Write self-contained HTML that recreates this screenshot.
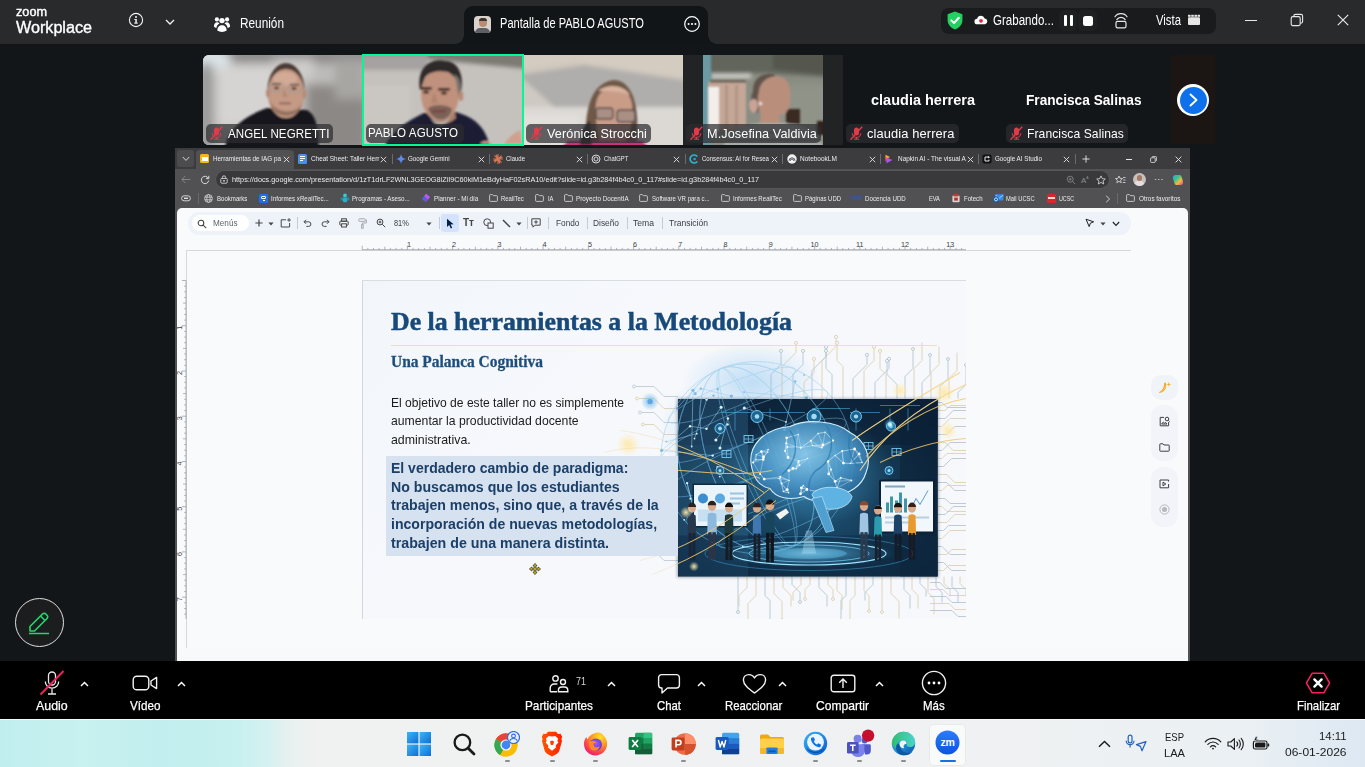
<!DOCTYPE html>
<html lang="es">
<head>
<meta charset="utf-8">
<title>Zoom Workplace</title>
<style>
*{box-sizing:border-box;margin:0;padding:0}
html,body{width:1365px;height:767px;overflow:hidden;background:#131619;font-family:"Liberation Sans",sans-serif;color:#fff}
.abs{position:absolute}
#root{position:relative;width:1365px;height:767px;overflow:hidden;background:#131619}
/* ---------- top bar ---------- */
#topbar{left:0;top:0;width:1365px;height:44px;background:#292a2c}
#sharetab{left:464px;top:6px;width:244px;height:38px;background:#121518;border-radius:9px 9px 0 0}
#sharetab:before,#sharetab:after{content:"";position:absolute;bottom:0;width:9px;height:9px}
#sharetab:before{left:-9px;background:radial-gradient(circle at 0 0,rgba(0,0,0,0) 8.5px,#121518 9px)}
#sharetab:after{right:-9px;background:radial-gradient(circle at 100% 0,rgba(0,0,0,0) 8.5px,#121518 9px)}
.t{position:absolute;white-space:nowrap;line-height:1;transform-origin:0 0}
#pill{left:941px;top:8px;width:275px;height:26px;background:#1a1b1d;border-radius:8px}
/* ---------- video strip ---------- */
.thumb{position:absolute;top:55px;height:90px;overflow:hidden}
.lbl{position:absolute;height:19px;background:rgba(44,45,48,.72);border-radius:5px;font-size:14px;line-height:19px;color:#fff;white-space:nowrap;padding-left:21px;letter-spacing:.1px}
.lbl svg{position:absolute;left:3px;top:2px}
.bigname{position:absolute;font-weight:bold;font-size:15.5px;white-space:nowrap;color:#fff;line-height:1}
/* ---------- shared screen ---------- */
#share{left:176px;top:150px;width:1013px;height:510px;background:#f9fafd;overflow:hidden}

/* share internals: coordinates are page-absolute (share is positioned at 0,0 overlay) */
#share{left:0;top:0;width:1365px;height:767px;background:none;overflow:visible;pointer-events:none}
.c{position:absolute}
.tt{position:absolute;white-space:nowrap;line-height:1;transform-origin:0 0;font-size:7.300px;color:#ececec;top:155.300px}
.bt{position:absolute;white-space:nowrap;line-height:1;transform-origin:0 0;font-size:7.200px;color:#ececec;top:194.600px}
.st{position:absolute;white-space:nowrap;line-height:1;transform-origin:0 0;font-size:8.600px;color:#3c4043;top:218.800px}
.tsep{position:absolute;top:153.500px;width:1px;height:10px;background:#6b6b6e}
.ssep{position:absolute;top:217px;width:1px;height:12px;background:#c7cad1}
.fold{position:absolute;top:194px;width:9px;height:8px}
/* ---------- zoom toolbar ---------- */
#ztool{left:0;top:660.700px;width:1365px;height:58.300px;background:#000}
.zl{position:absolute;top:698.800px;font-size:13px;color:#fff;white-space:nowrap;line-height:1;transform-origin:0 0;-webkit-text-stroke:.25px #fff}
/* ---------- taskbar ---------- */
#task{left:0;top:719px;width:1365px;height:48px;background:linear-gradient(90deg,#c0eeee 0,#c8f1f0 85px,#c1eeee 160px,#c7f0f0 235px,#d4f1f0 268px,#e9f1f0 292px,#f0f1f1 318px,#eff1f2 1000px,#eaf0f3 1250px,#dde8f3 100%);border-top:1px solid #f6f7f7}
</style>
</head>
<body>
<div id="root">

<!-- TOPBAR -->
<div id="topbar" class="abs"></div>
<div class="t" style="left:16px;top:6px;font-size:12.5px;color:#fff;-webkit-text-stroke:.4px #fff;--w:31px;transform:scaleX(1.0138)">zoom</div>
<div class="t" style="left:15.5px;top:19.5px;font-size:16px;color:#fff;-webkit-text-stroke:.35px #fff;--w:76px;transform:scaleX(1.0093)">Workplace</div>
<svg class="abs" style="left:128px;top:12px" width="16" height="16" viewBox="0 0 16 16"><circle cx="8" cy="8" r="6.6" fill="none" stroke="#f2f2f2" stroke-width="1.1"/><rect x="7.3" y="7" width="1.5" height="4.3" fill="#f2f2f2"/><rect x="6.4" y="7" width="2" height="1" fill="#f2f2f2"/><rect x="6.2" y="10.6" width="3.6" height="1" fill="#f2f2f2"/><circle cx="8" cy="4.9" r="1" fill="#f2f2f2"/></svg>
<svg class="abs" style="left:164px;top:17px" width="12" height="10" viewBox="0 0 12 10"><path d="M2 3 L6 7 L10 3" fill="none" stroke="#f2f2f2" stroke-width="1.3"/></svg>
<svg class="abs" style="left:213px;top:15px" width="18" height="18" viewBox="0 0 18 18" fill="#fff"><circle cx="9" cy="5.6" r="2.7"/><circle cx="3.9" cy="4.4" r="2.1"/><circle cx="14.1" cy="4.4" r="2.1"/><path d="M4.3 15.6c0-3.4 2-5.4 4.7-5.4s4.700 2 4.700 5.400c-1.300.9-3 1.300-4.700 1.300s-3.400-.4-4.700-1.300z"/><path d="M.9 11.500c0-2.600 1.400-4.200 3.200-4.200 1 0 1.800.4 2.400 1.100-1.700.9-2.800 2.500-3.100 4.600-1-.3-1.800-.8-2.500-1.500z"/><path d="M17.100 11.500c0-2.600-1.400-4.200-3.200-4.200-1 0-1.800.4-2.400 1.100 1.700.9 2.800 2.500 3.100 4.600 1-.3 1.800-.8 2.500-1.500z"/></svg>
<div class="t" style="left:240px;top:16px;font-size:14px;color:#fff;--w:44px;transform:scaleX(0.8436)">Reunión</div>

<div id="sharetab" class="abs"></div>
<div class="abs" style="left:474px;top:16px;width:17px;height:17px;border-radius:4px;overflow:hidden;background:#d9d3cc">
  <div class="abs" style="left:4.500px;top:2px;width:8px;height:9px;border-radius:4px;background:#b88d74"></div>
  <div class="abs" style="left:4.500px;top:1.500px;width:8px;height:3.500px;border-radius:4px 4px 0 0;background:#3d332e"></div>
  <div class="abs" style="left:1px;top:11.500px;width:15px;height:8px;border-radius:5px 5px 0 0;background:#5d5f66"></div>
</div>
<div class="t" style="left:500px;top:16px;font-size:14px;color:#fff;--w:144px;transform:scaleX(0.7930)">Pantalla de PABLO AGUSTO</div>
<svg class="abs" style="left:683px;top:15px" width="18" height="18" viewBox="0 0 18 18"><circle cx="9" cy="9" r="7.300" fill="none" stroke="#fff" stroke-width="1.200"/><circle cx="5.600" cy="9" r="1.050" fill="#fff"/><circle cx="9" cy="9" r="1.050" fill="#fff"/><circle cx="12.400" cy="9" r="1.050" fill="#fff"/></svg>

<div id="pill" class="abs"></div>
<svg class="abs" style="left:946px;top:11px" width="18" height="19" viewBox="0 0 18 19"><path d="M9 .6 L16.400 3.300 V9 c0 4.600-3.100 7.900-7.400 9.500 C4.700 16.900 1.600 13.600 1.600 9 V3.300 Z" fill="#23d160"/><path d="M5.300 9.400 L8 12 L12.800 6.800" fill="none" stroke="#fff" stroke-width="2" stroke-linecap="round" stroke-linejoin="round"/></svg>
<svg class="abs" style="left:974px;top:15px" width="14" height="10" viewBox="0 0 14 10"><path d="M3.400 9.300 a2.800 2.800 0 0 1 -.3 -5.600 a4 4 0 0 1 7.600 -.3 a3 3 0 0 1 .3 5.900 z" fill="#fff"/><circle cx="7" cy="5.800" r="1.900" fill="#e8273c"/></svg>
<div class="t" style="left:993px;top:13px;font-size:14px;color:#fff;--w:61px;transform:scaleX(0.8250)">Grabando...</div>
<div class="abs" style="left:1059px;top:10px;width:18px;height:21px;border-radius:5px;background:#1f2022"></div>
<div class="abs" style="left:1078px;top:10px;width:19px;height:21px;border-radius:5px;background:#1f2022"></div>
<div class="abs" style="left:1064px;top:15px;width:3px;height:11px;border-radius:1px;background:#fff"></div>
<div class="abs" style="left:1069.500px;top:15px;width:3px;height:11px;border-radius:1px;background:#fff"></div>
<div class="abs" style="left:1083px;top:15.500px;width:10px;height:10px;border-radius:2.500px;background:#fff"></div>
<svg class="abs" style="left:1112px;top:10px" width="18" height="20" viewBox="0 0 18 20" fill="none" stroke="#e8e8e8" stroke-width="1.200" stroke-linecap="round"><path d="M3 6.800 C5.500 2.600 12.500 2.600 15 6.800"/><path d="M4.800 9.600 C6.600 6.600 11.400 6.600 13.200 9.600"/><rect x="4" y="11.400" width="10" height="6.400" rx="1.600"/></svg>
<div class="t" style="left:1156px;top:13px;font-size:14px;color:#fff;--w:25px;transform:scaleX(0.8097)">Vista</div>
<svg class="abs" style="left:1187px;top:14px" width="14" height="12" viewBox="0 0 14 12" fill="#e6e6e6"><rect x="1" y="3.200" width="12" height="7.800" rx="1"/><rect x="1" y=".8" width="2.600" height="2" /><rect x="4.200" y=".8" width="2.600" height="2"/><rect x="7.400" y=".8" width="2.600" height="2"/><rect x="10.500" y=".8" width="2.500" height="2"/></svg>
<div class="abs" style="left:1245px;top:19.500px;width:12px;height:1.200px;background:#e8e8e8"></div>
<svg class="abs" style="left:1290px;top:13px" width="14" height="14" viewBox="0 0 14 14" fill="none" stroke="#e8e8e8" stroke-width="1.100"><rect x="1.200" y="3.600" width="9" height="9" rx="1.600"/><path d="M3.800 3.400 V3 a1.600 1.600 0 0 1 1.600 -1.600 H11 a1.600 1.600 0 0 1 1.600 1.600 V8.600 a1.600 1.600 0 0 1 -1.600 1.600 H10.400"/></svg>
<svg class="abs" style="left:1337px;top:14px" width="12" height="12" viewBox="0 0 12 12" fill="none" stroke="#e8e8e8" stroke-width="1.200"><path d="M.8 .8 L11.200 11.200 M11.200 .8 L.8 11.200"/></svg>

<!-- VIDEOSTRIP -->
<div id="strip">
<svg width="0" height="0" style="position:absolute"><defs>
<filter id="b1" x="-20%" y="-20%" width="140%" height="140%"><feGaussianBlur stdDeviation="1"/></filter>
<filter id="b2" x="-20%" y="-20%" width="140%" height="140%"><feGaussianBlur stdDeviation="2.200"/></filter>
<filter id="b4" x="-30%" y="-30%" width="160%" height="160%"><feGaussianBlur stdDeviation="5"/></filter>
</defs></svg>

<!-- 1 ANGEL -->
<div class="thumb" style="left:203px;width:159px;border-radius:6px 0 0 6px;background:#b9b7b5">
<svg class="abs" style="left:0;top:0" width="159" height="90" viewBox="0 0 159 90">
 <rect width="159" height="90" fill="#bdbbb9"/>
 <g filter="url(#b4)">
  <rect x="-5" y="-6" width="170" height="14" fill="#8a8a8a"/><ellipse cx="6" cy="6" rx="22" ry="12" fill="#dde6ea"/>
  <rect x="14" y="10" width="60" height="62" fill="#d6d4d2"/>
  <rect x="-4" y="8" width="14" height="90" fill="#9a9a9a"/>
  <rect x="104" y="30" width="60" height="66" fill="#8b8885"/>
  <rect x="132" y="4" width="30" height="40" fill="#a8a6a3"/>
  <rect x="70" y="4" width="40" height="20" fill="#cfcdcb"/>
 </g>
 <g filter="url(#b1)">
  <path d="M22 92 C26 72 44 60 64 53 L104 55 C116 62 114 78 116 92 Z" fill="#14161d"/>
  <ellipse cx="83" cy="35" rx="18.500" ry="27" fill="#4a3b34"/>
  <ellipse cx="83" cy="38.500" rx="18.200" ry="24.500" fill="#c59a85"/>
  <ellipse cx="82" cy="24" rx="12" ry="7" fill="#d2aa95"/>
  <path d="M66 44 C70 66 96 66 100 46 C96 60 72 60 66 44 Z" fill="#8a6756" opacity=".7"/>
  <rect x="68" y="28" width="13" height="9" rx="3" fill="none" stroke="#9d9a96" stroke-width="1"/>
  <rect x="85" y="29" width="13" height="9" rx="3" fill="none" stroke="#9d9a96" stroke-width="1"/>
  <rect x="76" y="47.500" width="12" height="1.800" rx=".9" fill="#8d5b52"/>
  <ellipse cx="73.500" cy="33" rx="2.600" ry="1.300" fill="#3a2a25"/><ellipse cx="91" cy="33.500" rx="2.600" ry="1.300" fill="#3a2a25"/>
  <rect x="69" y="28.500" width="9" height="1.500" fill="#5a4238"/><rect x="87" y="29" width="9" height="1.500" fill="#5a4238"/>
  <path d="M81 34 L79.500 42 H85 Z" fill="#a87d68" opacity=".6"/>
  <path d="M67 48 C70 62 96 62 99 48 C97 57 90 60 83 60 C76 60 69 57 67 48 Z" fill="#7d5e50" opacity=".55"/>
  <ellipse cx="65" cy="38" rx="2" ry="4.500" fill="#b58a76"/><ellipse cx="101.500" cy="39" rx="2" ry="4.500" fill="#b58a76"/>
 </g>
</svg>
<div class="lbl" style="left:3px;top:69px;width:127px"><svg width="15" height="15" viewBox="0 0 15 15"><rect x="5" y="1.500" width="5" height="8" rx="2.500" fill="#e23b49"/><path d="M3.300 7.200 a4.200 4.200 0 0 0 8.400 0" fill="none" stroke="#e23b49" stroke-width="1.100"/><rect x="7" y="11" width="1" height="2" fill="#e23b49"/><rect x="4.800" y="12.600" width="5.400" height="1.100" fill="#e23b49"/><path d="M1.500 13.800 L13.200 .8" stroke="#e23b49" stroke-width="1.300"/></svg><span class="t" style="left:21.500px;top:3.500px;font-size:12.700px;--w:101.500px;transform:scaleX(0.9093)">ANGEL NEGRETTI</span></div>
</div>

<!-- 2 PABLO -->
<div class="thumb" style="left:361.800px;top:53.900px;width:162.400px;height:92.300px;background:#c4c0bb;border:2.300px solid #05f896">
<svg class="abs" style="left:0;top:0" width="158" height="88" viewBox="0 0 158 88">
 <rect width="158" height="88" fill="#c5c1bc"/>
 <g filter="url(#b2)">
  <path d="M-6 -8 H166 V13 L60 3 L-6 1 Z" fill="#7d7973"/>
  <rect x="-4" y="30" width="50" height="64" fill="#cac7c3"/><rect x="-6" y="-2" width="70" height="16" fill="#a5a2a1"/>
 </g>
 <g filter="url(#b1)">
  <path d="M20 92 C26 76 42 66 60 57 L92 56 C112 62 122 72 126 92 Z" fill="#1a1f35"/>
  <path d="M66 60 L70 52 L90 52 L92 62 C84 70 72 70 66 60 Z" fill="#a97e6a"/>
  <ellipse cx="76" cy="38" rx="19" ry="27" fill="#c0917b"/>
  <path d="M56 34 C52 8 70 2 82 5 C96 6 100 22 97 36 C95 28 92 20 84 16 C74 14 62 16 60 24 C58 28 58 32 56 34 Z" fill="#2f2b2a"/>
  <path d="M90 18 C98 22 98 34 95 42 C93 34 93 26 90 18 Z" fill="#77736f"/>
  <path d="M64 53 C66 48 84 48 88 53 C86 66 70 68 64 53 Z" fill="#7a6259"/>
  <path d="M66 60 C70 68 82 68 86 60 C84 72 70 72 66 60 Z" fill="#b7b1ab"/>
  <rect x="56" y="31" width="12" height="2.400" rx="1" fill="#2b1f1c"/><rect x="74" y="32" width="12" height="2.400" rx="1" fill="#2b1f1c"/>
  <ellipse cx="62" cy="36" rx="3" ry="1.500" fill="#3b2a26"/><ellipse cx="80" cy="37" rx="3" ry="1.500" fill="#3b2a26"/>
  <path d="M70 36 L67 47 H74 Z" fill="#a77b66" opacity=".6"/>
  <ellipse cx="97" cy="40" rx="2.200" ry="5" fill="#b88a75"/>
  <rect x="68" y="54" width="14" height="2.600" rx="1" fill="#7b443f"/>
  <path d="M140 88 C144 82 150 77 156 74 L158 88 Z" fill="#cfa18c"/>
  <path d="M116 88 C118 84 124 84 128 88 Z" fill="#c99a85"/>
 </g>
</svg>
<div class="lbl" style="left:2px;top:68px;width:98px;padding-left:0"><span class="t" style="left:2px;top:3.500px;font-size:12.700px;--w:90px;transform:scaleX(0.9114)">PABLO AGUSTO</span></div>
</div>

<!-- 3 VERONICA -->
<div class="thumb" style="left:524px;width:159px;background:#c9c6c2">
<svg class="abs" style="left:0;top:0" width="159" height="90" viewBox="0 0 159 90">
 <rect width="159" height="90" fill="#b0aeac"/>
 <g filter="url(#b2)">
  <path d="M-5 -5 H165 V26 L60 10 L-5 20 Z" fill="#d0c8be"/>
  <path d="M-5 14 L50 6 L165 22 V-5 H-5 Z" fill="#d4ccc1"/>
  <path d="M-5 52 H165 V95 H-5 Z" fill="#dcd9d5"/>
  <path d="M-5 20 L30 52 H-5 Z" fill="#cfc9c3"/>
  <rect x="-5" y="60" width="60" height="36" fill="#e3dfdb"/>
 </g>
 <g filter="url(#b1)">
  <path d="M62 92 C60 56 66 28 90 25 C112 26 116 60 112 92 Z" fill="#6f5847"/>
  <path d="M72 60 C70 40 78 32 92 33 C106 34 110 46 108 64 C106 84 98 92 92 92 L78 92 C74 84 72 72 72 60 Z" fill="#c99c88"/>
  <path d="M74 36 C84 28 100 30 106 40 C96 36 84 36 74 36 Z" fill="#d9b39f"/>
  <rect x="72" y="53" width="17" height="11" rx="3" fill="#a98f84" stroke="#55494a" stroke-width="1.300"/>
  <rect x="93" y="55" width="18" height="12" rx="3" fill="#a98f84" stroke="#55494a" stroke-width="1.300"/>
  <path d="M38 92 L44 86 H118 L124 92 Z" fill="#c8307c"/>
  <path d="M56 90 C56 76 62 68 66 66 L68 90 Z" fill="#2d2a2b"/>
 </g>
</svg>
<div class="lbl" style="left:2px;top:69px;width:125px"><svg width="15" height="15" viewBox="0 0 15 15"><rect x="5" y="1.500" width="5" height="8" rx="2.500" fill="#e23b49"/><path d="M3.300 7.200 a4.200 4.200 0 0 0 8.400 0" fill="none" stroke="#e23b49" stroke-width="1.100"/><rect x="7" y="11" width="1" height="2" fill="#e23b49"/><rect x="4.800" y="12.600" width="5.400" height="1.100" fill="#e23b49"/><path d="M1.500 13.800 L13.200 .8" stroke="#e23b49" stroke-width="1.300"/></svg><span class="t" style="left:21px;top:3.500px;font-size:12.700px;--w:100px;transform:scaleX(0.9956)">Verónica Strocchi</span></div>
</div>

<!-- 4 JOSEFINA -->
<div class="thumb" style="left:683px;width:160px;background:#222324">
<svg class="abs" style="left:20px;top:0" width="120" height="90" viewBox="0 0 120 90">
 <rect width="120" height="90" fill="#8a8d82"/>
 <g filter="url(#b2)">
  <path d="M-4 -4 H124 V22 L60 18 L8 20 Z" fill="#62655b"/>
  <path d="M70 -4 H124 V20 L70 14 Z" fill="#54574d"/>
  <rect x="8" y="19" width="40" height="4" fill="#d8d8d2"/>
  <rect x="60" y="30" width="64" height="50" fill="#8f9388"/>
 </g>
 <rect x="-2" y="-2" width="10" height="94" fill="#6b9aa3" filter="url(#b1)"/>
 <g filter="url(#b1)">
  <rect x="5" y="27" width="38" height="48" fill="#c4a797"/>
  <rect x="5" y="32" width="11" height="44" fill="#f4eeea"/>
  <rect x="22" y="30" width="3" height="44" fill="#b39485"/><rect x="32" y="30" width="3" height="44" fill="#b39485"/>
  <rect x="7" y="25.500" width="36" height="2" fill="#5d5148"/>
  <rect x="83" y="54" width="14" height="15" fill="#3a2a23"/>
  <rect x="114" y="66" width="8" height="14" fill="#30221d"/>
  <path d="M50 36 C50 22 60 18 70 19 C74 19 70 26 64 30 C60 40 58 52 54 58 C48 56 46 46 50 36 Z" fill="#5f524b"/>
  <path d="M46 50 C46 44 52 42 54 46 C56 52 54 58 50 58 C48 56 46 54 46 50 Z" fill="#c9a396"/>
  <path d="M56 36 C58 22 74 18 82 24 C88 30 88 40 87 48 C86 56 82 60 76 60 L78 70 L56 72 L58 58 C54 52 54 44 56 36 Z" fill="#b98f7c"/>
  <circle cx="57.500" cy="48.500" r="1.500" fill="#f4f4f4"/>
  <path d="M20 92 C24 76 40 70 56 68 L82 68 C100 70 116 76 120 92 Z" fill="#a9ada8"/>
  <path d="M22 84 H118 V86.500 H22 Z M30 77 H112 V79 H30 Z" fill="#6f756f"/>
 </g>
</svg>
<div class="lbl" style="left:3px;top:69px;width:135px"><svg width="15" height="15" viewBox="0 0 15 15"><rect x="5" y="1.500" width="5" height="8" rx="2.500" fill="#e23b49"/><path d="M3.300 7.200 a4.200 4.200 0 0 0 8.400 0" fill="none" stroke="#e23b49" stroke-width="1.100"/><rect x="7" y="11" width="1" height="2" fill="#e23b49"/><rect x="4.800" y="12.600" width="5.400" height="1.100" fill="#e23b49"/><path d="M1.500 13.800 L13.200 .8" stroke="#e23b49" stroke-width="1.300"/></svg><span class="t" style="left:21px;top:3.500px;font-size:12.700px;--w:110px;transform:scaleX(0.9976)">M.Josefina Valdivia</span></div>
</div>

<!-- 5 CLAUDIA -->
<div class="t" style="left:871px;top:92px;font-size:15.500px;font-weight:bold;--w:104px;transform:scaleX(0.9356)">claudia herrera</div>
<div class="lbl" style="left:846px;top:124px;width:113px"><svg width="15" height="15" viewBox="0 0 15 15"><rect x="5" y="1.500" width="5" height="8" rx="2.500" fill="#e23b49"/><path d="M3.300 7.200 a4.200 4.200 0 0 0 8.400 0" fill="none" stroke="#e23b49" stroke-width="1.100"/><rect x="7" y="11" width="1" height="2" fill="#e23b49"/><rect x="4.800" y="12.600" width="5.400" height="1.100" fill="#e23b49"/><path d="M1.500 13.800 L13.200 .8" stroke="#e23b49" stroke-width="1.300"/></svg><span class="t" style="left:21px;top:3.500px;font-size:12.700px;--w:87.500px;transform:scaleX(1.0158)">claudia herrera</span></div>

<!-- 6 FRANCISCA -->
<div class="t" style="left:1025.500px;top:92px;font-size:15.500px;font-weight:bold;--w:115.500px;transform:scaleX(0.8819)">Francisca Salinas</div>
<div class="lbl" style="left:1006px;top:124px;width:122px"><svg width="15" height="15" viewBox="0 0 15 15"><rect x="5" y="1.500" width="5" height="8" rx="2.500" fill="#e23b49"/><path d="M3.300 7.200 a4.200 4.200 0 0 0 8.400 0" fill="none" stroke="#e23b49" stroke-width="1.100"/><rect x="7" y="11" width="1" height="2" fill="#e23b49"/><rect x="4.800" y="12.600" width="5.400" height="1.100" fill="#e23b49"/><path d="M1.500 13.800 L13.200 .8" stroke="#e23b49" stroke-width="1.300"/></svg><span class="t" style="left:21px;top:3.500px;font-size:12.700px;--w:97px;transform:scaleX(0.9524)">Francisca Salinas</span></div>

<!-- NEXT -->
<div class="abs" style="left:1171px;top:55px;width:44px;height:89px;background:#1b1513"></div>
<div class="abs" style="left:1177px;top:84px;width:32px;height:32px;border-radius:50%;background:#fff"></div>
<div class="abs" style="left:1179.500px;top:86.500px;width:27px;height:27px;border-radius:50%;background:#0e71eb"></div>
<svg class="abs" style="left:1186px;top:92px" width="14" height="16" viewBox="0 0 14 16"><path d="M4.500 2.500 L10.500 8 L4.500 13.500" fill="none" stroke="#fff" stroke-width="1.900" stroke-linecap="round" stroke-linejoin="round"/></svg>
</div>

<!-- SHARE -->
<div id="share" class="abs">
<div class="c" style="left:175px;top:148px;width:1015px;height:512.700px;background:#515154"></div>
<div class="c" style="left:175px;top:148px;width:1015px;height:21px;background:#3c3c3f"></div>
<div class="c" style="left:177px;top:150px;width:17px;height:17px;border-radius:3px;background:#4c4c4f"></div>
<svg class="c" style="left:181.500px;top:156px" width="8" height="6" viewBox="0 0 8 6"><path d="M.8 1 L4 4.400 L7.200 1" stroke="#e8e8e8" stroke-width=".9" fill="none"/></svg>
<div class="c" style="left:196.300px;top:150px;width:98px;height:19px;border-radius:4px 4px 0 0;background:#515154"></div>
<div class="c" style="left:200.3px;top:154px;width:9px;height:9px;border-radius:1.500px;background:#f5b912"><div class="c" style="left:1.500px;top:2.500px;width:6px;height:4px;background:#fff"></div></div>
<div class="tt" style="left:212.8px;--w:68.0px;transform:scaleX(0.8642)">Herramientas de IAG pa</div>
<svg class="c" style="left:282.8px;top:155.500px" width="7" height="7" viewBox="0 0 7 7"><path d="M.8 .8 L6.200 6.200 M6.200 .8 L.8 6.200" stroke="#e4e4e4" stroke-width=".9" fill="none"/></svg>
<div class="c" style="left:298.0px;top:154px;width:8.500px;height:9.500px;border-radius:1.500px;background:#4b8bf5"><div class="c" style="left:1.800px;top:2.400px;width:5px;height:1px;background:#fff"></div><div class="c" style="left:1.800px;top:4.300px;width:5px;height:1px;background:#fff"></div><div class="c" style="left:1.800px;top:6.200px;width:3.500px;height:1px;background:#fff"></div></div>
<div class="tt" style="left:310.6px;--w:68.4px;transform:scaleX(0.8752)">Cheat Sheet: Taller Herr</div>
<svg class="c" style="left:380.1px;top:155.500px" width="7" height="7" viewBox="0 0 7 7"><path d="M.8 .8 L6.200 6.200 M6.200 .8 L.8 6.200" stroke="#e4e4e4" stroke-width=".9" fill="none"/></svg>
<div class="tsep" style="left:391.5px"></div>
<svg class="c" style="left:395.7px;top:153.500px" width="10" height="10" viewBox="0 0 10 10"><defs><linearGradient id="gg" x1="0" y1="1" x2="1" y2="0"><stop offset="0" stop-color="#4f8df6"/><stop offset=".6" stop-color="#5b8bf0"/><stop offset="1" stop-color="#e8a33a"/></linearGradient></defs><path d="M5 0 C5.300 3 7 4.700 10 5 C7 5.300 5.300 7 5 10 C4.700 7 3 5.300 0 5 C3 4.700 4.700 3 5 0 Z" fill="url(#gg)"/></svg>
<div class="tt" style="left:408.4px;--w:41.6px;transform:scaleX(0.8547)">Google Gemini</div>
<svg class="c" style="left:478.0px;top:155.500px" width="7" height="7" viewBox="0 0 7 7"><path d="M.8 .8 L6.200 6.200 M6.200 .8 L.8 6.200" stroke="#e4e4e4" stroke-width=".9" fill="none"/></svg>
<div class="tsep" style="left:489.2px"></div>
<svg class="c" style="left:493.4px;top:153.500px" width="10" height="10" viewBox="0 0 10 10" stroke="#d97757" stroke-width="1.100" stroke-linecap="round"><path d="M5 .6 V9.400 M.6 5 H9.400 M1.800 1.800 L8.200 8.200 M8.200 1.800 L1.800 8.200 M3.200 .9 L6.800 9.100 M.9 6.800 L9.100 3.200"/></svg>
<div class="tt" style="left:506.0px;--w:19.0px;transform:scaleX(0.8216)">Claude</div>
<svg class="c" style="left:575.5px;top:155.500px" width="7" height="7" viewBox="0 0 7 7"><path d="M.8 .8 L6.200 6.200 M6.200 .8 L.8 6.200" stroke="#e4e4e4" stroke-width=".9" fill="none"/></svg>
<div class="tsep" style="left:586.9px"></div>
<svg class="c" style="left:591.1px;top:153.500px" width="10" height="10" viewBox="0 0 10 10" fill="none" stroke="#e6e6e6" stroke-width=".9"><circle cx="5" cy="5" r="4"/><path d="M5 2.800 L6.900 3.900 V6.100 L5 7.200 L3.100 6.100 V3.900 Z"/></svg>
<div class="tt" style="left:603.8px;--w:24.2px;transform:scaleX(0.7955)">ChatGPT</div>
<svg class="c" style="left:673.3px;top:155.500px" width="7" height="7" viewBox="0 0 7 7"><path d="M.8 .8 L6.200 6.200 M6.200 .8 L.8 6.200" stroke="#e4e4e4" stroke-width=".9" fill="none"/></svg>
<div class="tsep" style="left:684.6px"></div>
<svg class="c" style="left:688.8px;top:153.500px" width="10" height="10" viewBox="0 0 10 10" fill="none"><path d="M8.300 2.600 A4 4 0 1 0 8.300 7.400" stroke="#2bb5c8" stroke-width="1.700"/><circle cx="5.600" cy="5" r="1.300" fill="#2d9fe0"/></svg>
<div class="tt" style="left:702.0px;--w:67.0px;transform:scaleX(0.8300)">Consensus: AI for Resea</div>
<svg class="c" style="left:771.3px;top:155.500px" width="7" height="7" viewBox="0 0 7 7"><path d="M.8 .8 L6.200 6.200 M6.200 .8 L.8 6.200" stroke="#e4e4e4" stroke-width=".9" fill="none"/></svg>
<div class="tsep" style="left:782.3px"></div>
<svg class="c" style="left:786.5px;top:153.500px" width="10" height="10" viewBox="0 0 10 10"><circle cx="5" cy="5" r="4.700" fill="#f2f2f2"/><path d="M2 6.800 a3 3 0 0 1 6 0 M3.300 6.800 a1.700 1.700 0 0 1 3.400 0" fill="none" stroke="#333" stroke-width=".8"/></svg>
<div class="tt" style="left:799.6px;--w:36.9px;transform:scaleX(0.8918)">NotebookLM</div>
<svg class="c" style="left:869.1px;top:155.500px" width="7" height="7" viewBox="0 0 7 7"><path d="M.8 .8 L6.200 6.200 M6.200 .8 L.8 6.200" stroke="#e4e4e4" stroke-width=".9" fill="none"/></svg>
<div class="tsep" style="left:880.0px"></div>
<svg class="c" style="left:884.2px;top:153.500px" width="10" height="10" viewBox="0 0 10 10"><path d="M1.500 .8 L6 3 L1.500 5.200 Z" fill="#f7b32b"/><path d="M2.500 3.400 L8.500 6 L2.500 9.200 Z" fill="#a855f7"/><path d="M1.500 2.800 L5 5 L1.500 7.400 Z" fill="#ec4899"/></svg>
<div class="tt" style="left:897.5px;--w:67.9px;transform:scaleX(0.8779)">Napkin AI - The visual A</div>
<svg class="c" style="left:966.5px;top:155.500px" width="7" height="7" viewBox="0 0 7 7"><path d="M.8 .8 L6.200 6.200 M6.200 .8 L.8 6.200" stroke="#e4e4e4" stroke-width=".9" fill="none"/></svg>
<div class="tsep" style="left:977.7px"></div>
<svg class="c" style="left:981.9px;top:153.500px" width="10" height="10" viewBox="0 0 10 10"><rect x=".4" y=".4" width="9.200" height="9.200" rx="2" fill="#101114"/><path d="M6.800 3 H3 V7 H7 V5.600" fill="none" stroke="#fff" stroke-width=".9"/><path d="M6.800 1.600 L7.200 2.800 L8.400 3.200 L7.200 3.600 L6.800 4.800 L6.400 3.600 L5.200 3.200 L6.400 2.800 Z" fill="#fff"/></svg>
<div class="tt" style="left:995.0px;--w:47.0px;transform:scaleX(0.8580)">Google AI Studio</div>
<svg class="c" style="left:1063.3px;top:155.500px" width="7" height="7" viewBox="0 0 7 7"><path d="M.8 .8 L6.200 6.200 M6.200 .8 L.8 6.200" stroke="#e4e4e4" stroke-width=".9" fill="none"/></svg>
<div class="tsep" style="left:1075.4px"></div>
<svg class="c" style="left:1082px;top:155px" width="8" height="8" viewBox="0 0 8 8"><path d="M4 .4 V7.600 M.4 4 H7.600" stroke="#e8e8e8" stroke-width=".9"/></svg>
<div class="c" style="left:1126px;top:158.500px;width:6px;height:1px;background:#e8e8e8"></div>
<svg class="c" style="left:1150px;top:155.500px" width="7" height="7" viewBox="0 0 7 7" fill="none" stroke="#e8e8e8" stroke-width=".8"><rect x=".6" y="1.800" width="4.600" height="4.600" rx=".8"/><path d="M2 1.600 V1.200 a.6 .6 0 0 1 .6 -.6 H5.800 a.6 .6 0 0 1 .6 .6 V4.400 a.6 .6 0 0 1 -.6 .6 H5.400"/></svg>
<svg class="c" style="left:1174.500px;top:155.500px" width="7" height="7" viewBox="0 0 7 7"><path d="M.6 .6 L6.400 6.400 M6.400 .6 L.6 6.400" stroke="#e8e8e8" stroke-width=".9" fill="none"/></svg>
<svg class="c" style="left:181px;top:175px" width="10" height="9" viewBox="0 0 10 9"><path d="M9.400 4.500 H1 M4.400 .9 L.9 4.500 L4.400 8.100" stroke="#8b8b8e" stroke-width=".9" fill="none"/></svg>
<svg class="c" style="left:200px;top:174.500px" width="10" height="10" viewBox="0 0 10 10"><path d="M8.300 3.200 A3.700 3.700 0 1 0 8.700 5.600" stroke="#e6e6e6" stroke-width=".9" fill="none"/><path d="M8.800 .8 V3.600 H6" stroke="#e6e6e6" stroke-width=".9" fill="none"/></svg>
<div class="c" style="left:216px;top:171.300px;width:893px;height:16.700px;border-radius:8.400px;background:#39393c;box-shadow:0 0 0 .5px #5e5e61"></div>
<svg class="c" style="left:220px;top:175px" width="8" height="9" viewBox="0 0 8 9" fill="none" stroke="#e6e6e6" stroke-width=".8"><rect x=".8" y="3.400" width="6.400" height="4.800" rx="1"/><path d="M2.400 3.400 V2.400 a1.600 1.600 0 0 1 3.200 0 V3.400"/><circle cx="4" cy="5.800" r=".5" fill="#e6e6e6"/></svg>
<div class="t" style="left:231.800px;top:175.600px;font-size:7.800px;color:#ededed;--w:527px;transform:scaleX(0.9343)">https://docs.google.com/presentation/d/1zT1drLF2WNL3GEOG8iZiI9C60kiM1eBdyHaF02sRA10/edit?slide=id.g3b284f4b4c0_0_117#slide=id.g3b284f4b4c0_0_117</div>
<svg class="c" style="left:1066px;top:175px" width="10" height="10" viewBox="0 0 10 10" fill="none" stroke="#8e8e91" stroke-width=".8"><circle cx="4.200" cy="4.200" r="3"/><path d="M6.400 6.400 L9 9 M2.800 4.200 H5.600 M4.200 2.800 V5.600"/></svg>
<div class="t" style="left:1081px;top:175.500px;font-size:8px;color:#8e8e91">A<span style="font-size:5px;vertical-align:3px">ᴬ</span></div>
<svg class="c" style="left:1096px;top:174.500px" width="10" height="10" viewBox="0 0 10 10"><path d="M5 .9 L6.300 3.700 L9.300 4 L7 6 L7.700 9 L5 7.400 L2.300 9 L3 6 L.7 4 L3.700 3.700 Z" fill="none" stroke="#e0e0e0" stroke-width=".8"/></svg>
<svg class="c" style="left:1115px;top:174.500px" width="11" height="10" viewBox="0 0 11 10" fill="none" stroke="#e0e0e0" stroke-width=".8"><path d="M4 1 L5 3.300 L7.500 3.600 L5.600 5.200 L6.200 7.700 L4 6.400 L1.800 7.700 L2.400 5.200 L.5 3.600 L3 3.300 Z"/><path d="M8 2.500 H10.500 M8.300 5 H10.500 M7.800 7.500 H10.500"/></svg>
<div class="c" style="left:1132.800px;top:173px;width:13.400px;height:13.400px;border-radius:50%;background:#c8c2be;overflow:hidden"><div class="c" style="left:4.200px;top:2px;width:5px;height:6px;border-radius:3px;background:#a87a65"></div><div class="c" style="left:1.700px;top:8px;width:10px;height:7px;border-radius:4px 4px 0 0;background:#e6dfe0"></div></div>
<div class="t" style="left:1154px;top:174.500px;font-size:9px;color:#e6e6e6;letter-spacing:.3px">···</div>
<svg class="c" style="left:1172px;top:173.500px" width="12" height="12" viewBox="0 0 12 12"><defs><linearGradient id="cp" x1="0" y1="0" x2="1" y2="1"><stop offset="0" stop-color="#2aa6f0"/><stop offset=".35" stop-color="#36c48f"/><stop offset=".65" stop-color="#f6b73c"/><stop offset="1" stop-color="#e0459b"/></linearGradient></defs><path d="M3.500 1 H7.500 C9 1 9.400 2 9.800 3.400 L11 7.400 C11.400 9 10.600 11 8.500 11 H4.500 C3 11 2.600 10 2.200 8.600 L1 4.600 C.6 3 1.400 1 3.500 1 Z" fill="url(#cp)"/></svg>
<svg class="c" style="left:181px;top:194.500px" width="10" height="7" viewBox="0 0 10 7" fill="none" stroke="#e0e0e0" stroke-width=".9"><rect x=".6" y=".8" width="8.800" height="5" rx="2.500"/><rect x="3" y="2.600" width="4" height="1.400" fill="#e0e0e0" stroke="none"/></svg>
<div class="c" style="left:197.500px;top:192.500px;width:1px;height:11px;background:#69696c"></div>
<svg class="c" style="left:204px;top:193.500px" width="9" height="9" viewBox="0 0 9 9" fill="none" stroke="#e6e6e6" stroke-width=".7"><circle cx="4.500" cy="4.500" r="3.900"/><ellipse cx="4.500" cy="4.500" rx="1.700" ry="3.900"/><path d="M.8 3.200 H8.200 M.8 5.800 H8.200"/></svg>
<div class="bt" style="left:216.6px;--w:30.4px;transform:scaleX(0.8455)">Bookmarks</div>
<div class="bt" style="left:270.6px;--w:57.8px;transform:scaleX(0.8613)">Informes xRealiTec...</div>
<div class="bt" style="left:352.0px;--w:57.6px;transform:scaleX(0.8583)">Programas - Aseso...</div>
<div class="bt" style="left:433.7px;--w:44.3px;transform:scaleX(0.8732)">Planner - Mi día</div>
<div class="bt" style="left:501.0px;--w:22.8px;transform:scaleX(0.8272)">RealiTec</div>
<div class="bt" style="left:547.5px;--w:5.5px;transform:scaleX(0.8092)">IA</div>
<div class="bt" style="left:576.0px;--w:52.6px;transform:scaleX(0.8776)">Proyecto DocentIA</div>
<div class="bt" style="left:651.5px;--w:57.5px;transform:scaleX(0.8417)">Software VR para c...</div>
<div class="bt" style="left:733.0px;--w:48.7px;transform:scaleX(0.8465)">Informes RealiTec</div>
<div class="bt" style="left:805.0px;--w:36.0px;transform:scaleX(0.8267)">Páginas UDD</div>
<div class="bt" style="left:864.8px;--w:40.8px;transform:scaleX(0.8581)">Docencia UDD</div>
<div class="bt" style="left:928.5px;--w:10.9px;transform:scaleX(0.7865)">EVA</div>
<div class="bt" style="left:963.5px;--w:18.5px;transform:scaleX(0.8415)">Fotech</div>
<div class="bt" style="left:1006.0px;--w:28.6px;transform:scaleX(0.8046)">Mail UCSC</div>
<div class="bt" style="left:1058.6px;--w:15.2px;transform:scaleX(0.7460)">UCSC</div>
<div class="bt" style="left:1138.6px;--w:41.4px;transform:scaleX(0.8859)">Otros favoritos</div>
<svg class="fold" style="left:488.5px" viewBox="0 0 9 8"><path d="M.6 1.400 a.8 .8 0 0 1 .8 -.8 H3.400 L4.400 1.700 H7.600 a.8 .8 0 0 1 .8 .8 V6.600 a.8 .8 0 0 1 -.8 .8 H1.400 a.8 .8 0 0 1 -.8 -.8 Z" fill="none" stroke="#e0e0e0" stroke-width=".8"/></svg>
<svg class="fold" style="left:534.5px" viewBox="0 0 9 8"><path d="M.6 1.400 a.8 .8 0 0 1 .8 -.8 H3.400 L4.400 1.700 H7.600 a.8 .8 0 0 1 .8 .8 V6.600 a.8 .8 0 0 1 -.8 .8 H1.400 a.8 .8 0 0 1 -.8 -.8 Z" fill="none" stroke="#e0e0e0" stroke-width=".8"/></svg>
<svg class="fold" style="left:563.5px" viewBox="0 0 9 8"><path d="M.6 1.400 a.8 .8 0 0 1 .8 -.8 H3.400 L4.400 1.700 H7.600 a.8 .8 0 0 1 .8 .8 V6.600 a.8 .8 0 0 1 -.8 .8 H1.400 a.8 .8 0 0 1 -.8 -.8 Z" fill="none" stroke="#e0e0e0" stroke-width=".8"/></svg>
<svg class="fold" style="left:639.3px" viewBox="0 0 9 8"><path d="M.6 1.400 a.8 .8 0 0 1 .8 -.8 H3.400 L4.400 1.700 H7.600 a.8 .8 0 0 1 .8 .8 V6.600 a.8 .8 0 0 1 -.8 .8 H1.400 a.8 .8 0 0 1 -.8 -.8 Z" fill="none" stroke="#e0e0e0" stroke-width=".8"/></svg>
<svg class="fold" style="left:721.3px" viewBox="0 0 9 8"><path d="M.6 1.400 a.8 .8 0 0 1 .8 -.8 H3.400 L4.400 1.700 H7.600 a.8 .8 0 0 1 .8 .8 V6.600 a.8 .8 0 0 1 -.8 .8 H1.400 a.8 .8 0 0 1 -.8 -.8 Z" fill="none" stroke="#e0e0e0" stroke-width=".8"/></svg>
<svg class="fold" style="left:792.5px" viewBox="0 0 9 8"><path d="M.6 1.400 a.8 .8 0 0 1 .8 -.8 H3.400 L4.400 1.700 H7.600 a.8 .8 0 0 1 .8 .8 V6.600 a.8 .8 0 0 1 -.8 .8 H1.400 a.8 .8 0 0 1 -.8 -.8 Z" fill="none" stroke="#e0e0e0" stroke-width=".8"/></svg>
<svg class="fold" style="left:1126.0px" viewBox="0 0 9 8"><path d="M.6 1.400 a.8 .8 0 0 1 .8 -.8 H3.400 L4.400 1.700 H7.600 a.8 .8 0 0 1 .8 .8 V6.600 a.8 .8 0 0 1 -.8 .8 H1.400 a.8 .8 0 0 1 -.8 -.8 Z" fill="none" stroke="#e0e0e0" stroke-width=".8"/></svg>
<div class="c" style="left:259px;top:193.500px;width:9px;height:9px;border-radius:1.500px;background:#1a73e8"><div class="c" style="left:1.800px;top:2px;width:5.400px;height:3.800px;border:1px solid #fff;border-radius:1px"></div><div class="c" style="left:3.500px;top:6.200px;width:2px;height:1.300px;background:#fff"></div></div>
<svg class="c" style="left:339.500px;top:193px" width="10" height="10" viewBox="0 0 10 10"><circle cx="5" cy="2.400" r="1.900" fill="#38c6d8"/><circle cx="2.200" cy="6" r="1.700" fill="#1f8ea0"/><circle cx="7.800" cy="6" r="1.700" fill="#1f8ea0"/><rect x="3" y="4.400" width="4" height="4.800" rx="1" fill="#2ab0c4"/></svg>
<svg class="c" style="left:420.500px;top:193px" width="10" height="10" viewBox="0 0 10 10"><path d="M1 6 L5 .8 L9 4 L5 9.200 Z" fill="#7b4fd6"/><path d="M5 .8 L9 4 L7 6.600 L3.200 3.200 Z" fill="#c05ae0"/><path d="M1 6 L3.200 3.200 L5.200 5 L3 7.800 Z" fill="#3f6ae8"/></svg>
<div class="t" style="left:851px;top:196px;font-size:5px;font-weight:bold;color:#2a5bbd;--w:11px;transform:scaleX(1.0144)">UDD</div>
<svg class="c" style="left:951px;top:193px" width="10" height="10" viewBox="0 0 10 10"><rect x="1.400" y="2.600" width="7.200" height="6.600" rx="1" fill="#d9d4d0"/><rect x="2.600" y=".8" width="4.800" height="2.600" fill="#c0392b"/><rect x="3.200" y="4.600" width="3.600" height="3" fill="#b5342a"/></svg>
<svg class="c" style="left:993px;top:193px" width="11" height="10" viewBox="0 0 11 10"><rect x="2.400" y="1.200" width="8" height="6.400" rx="1" fill="#2f8cf0"/><path d="M2.400 2 L6.400 5 L10.400 2" stroke="#bfe0ff" stroke-width=".8" fill="none"/><rect x=".4" y="3.600" width="5.200" height="5.600" rx="1" fill="#0f5cc0"/><circle cx="3" cy="6.400" r="1.500" fill="none" stroke="#fff" stroke-width=".8"/></svg>
<div class="c" style="left:1046.500px;top:193.500px;width:9.500px;height:9px;border-radius:1.500px;background:#d42a2a"><div class="c" style="left:1.500px;top:3.600px;width:6.500px;height:1.800px;background:#f7dcdc"></div></div>
<svg class="c" style="left:1104.500px;top:194.500px" width="6" height="8" viewBox="0 0 6 8"><path d="M1.200 .8 L4.600 4 L1.200 7.200" stroke="#e0e0e0" stroke-width=".9" fill="none"/></svg>
<div class="c" style="left:1117px;top:192.500px;width:1px;height:11px;background:#69696c"></div>
<div class="c" style="left:176.600px;top:207.600px;width:1011.400px;height:453.100px;border-radius:5px 5px 0 0;background:#f9fafc"></div>
<div class="c" style="left:188.300px;top:212px;width:942.700px;height:22.700px;border-radius:11.400px;background:#eef2f9"></div>
<div class="c" style="left:191.800px;top:215px;width:57px;height:16.400px;border-radius:8.200px;background:#fff"></div>
<svg class="c" style="left:197px;top:218.500px" width="10" height="10" viewBox="0 0 10 10" fill="none" stroke="#444746" stroke-width="1.100"><circle cx="4" cy="4" r="2.800"/><path d="M6.200 6.200 L9.200 9.200"/></svg>
<div class="st" style="left:212.500px;color:#5f6368;--w:24.500px;transform:scaleX(0.9497)">Menús</div>
<svg class="c" style="left:254.500px;top:219px" width="8" height="8" viewBox="0 0 8 8"><path d="M4 .4 V7.600 M.4 4 H7.600" stroke="#444746" stroke-width="1.200"/></svg>
<svg class="c" style="left:268.4px;top:222px" width="6" height="4" viewBox="0 0 6 4"><path d="M.4 .4 H5.600 L3 3.400 Z" fill="#444746"/></svg>
<svg class="c" style="left:279.500px;top:217.500px" width="11" height="10" viewBox="0 0 11 10" fill="none" stroke="#444746" stroke-width="1"><path d="M6 1.800 H1.200 V9 H9.600 V5"/><path d="M9 .2 V3.800 M7.200 2 H10.800"/></svg>
<div class="ssep" style="left:296.6px"></div>
<div class="ssep" style="left:439.0px"></div>
<div class="ssep" style="left:526.5px"></div>
<div class="ssep" style="left:547.5px"></div>
<div class="ssep" style="left:586.7px"></div>
<div class="ssep" style="left:626.7px"></div>
<div class="ssep" style="left:661.5px"></div>
<svg class="c" style="left:302.500px;top:219px" width="9" height="8" viewBox="0 0 9 8" fill="none" stroke="#444746" stroke-width="1"><path d="M3 .8 L1 2.800 L3 4.800"/><path d="M1.200 2.800 H5.600 a2.300 2.300 0 0 1 0 4.600 H3.400"/></svg>
<svg class="c" style="left:321.300px;top:219px" width="9" height="8" viewBox="0 0 9 8" fill="none" stroke="#444746" stroke-width="1"><path d="M6 .8 L8 2.800 L6 4.800"/><path d="M7.800 2.800 H3.400 a2.300 2.300 0 0 0 0 4.600 H5.600"/></svg>
<svg class="c" style="left:339.400px;top:218px" width="10" height="10" viewBox="0 0 10 10" fill="none" stroke="#444746" stroke-width="1"><rect x="2.600" y=".8" width="4.800" height="2.400"/><rect x=".8" y="3.200" width="8.400" height="4" rx=".8"/><rect x="2.600" y="5.800" width="4.800" height="3.200" fill="#eef2f9"/></svg>
<svg class="c" style="left:357.500px;top:217.500px" width="9" height="11" viewBox="0 0 9 11" fill="none" stroke="#a9acb0" stroke-width="1"><rect x=".8" y=".8" width="6.400" height="2.600" rx=".6"/><path d="M7.200 2 H8.400 V5 H4.400 V6.400"/><rect x="3.600" y="6.600" width="1.600" height="3.600"/></svg>
<svg class="c" style="left:376px;top:218px" width="10" height="10" viewBox="0 0 10 10" fill="none" stroke="#444746" stroke-width="1"><circle cx="4" cy="4" r="2.900"/><path d="M6.200 6.200 L9.200 9.200 M2.700 4 H5.300 M4 2.700 V5.300"/></svg>
<div class="st" style="left:394px;--w:14.800px;transform:scaleX(0.8603)">81%</div>
<svg class="c" style="left:426.0px;top:222px" width="6" height="4" viewBox="0 0 6 4"><path d="M.4 .4 H5.600 L3 3.400 Z" fill="#444746"/></svg>
<div class="c" style="left:441px;top:214px;width:17.500px;height:17.700px;border-radius:3px;background:#d3e3fd"></div>
<svg class="c" style="left:445.500px;top:217.500px" width="9" height="11" viewBox="0 0 9 11"><path d="M1 .8 L1 9 L3.200 7 L4.800 10.400 L6.200 9.800 L4.600 6.400 L7.600 6.200 Z" fill="#041e49"/></svg>
<div class="st" style="left:462.500px;top:218px;font-size:10px;font-weight:bold;color:#444746;--w:11px;transform:scaleX(0.9986)">Tт</div>
<svg class="c" style="left:482.500px;top:218px" width="11" height="11" viewBox="0 0 11 11" fill="none" stroke="#444746" stroke-width="1"><circle cx="4.200" cy="4.200" r="3.400"/><rect x="5" y="5" width="5.200" height="5.200" fill="#eef2f9"/></svg>
<svg class="c" style="left:501.500px;top:218.500px" width="9" height="9" viewBox="0 0 9 9"><path d="M1 1 L8 8" stroke="#444746" stroke-width="1.500"/></svg>
<svg class="c" style="left:515.7px;top:222px" width="6" height="4" viewBox="0 0 6 4"><path d="M.4 .4 H5.600 L3 3.400 Z" fill="#444746"/></svg>
<svg class="c" style="left:531px;top:218px" width="10" height="10" viewBox="0 0 10 10" fill="none" stroke="#444746" stroke-width="1"><path d="M.8 .8 H9.200 V7.200 H4 L2 9.200 V7.200 H.8 Z"/><path d="M5 2.200 V5.800 M3.200 4 H6.800"/></svg>
<div class="st" style="left:555.6px;--w:23.4px;transform:scaleX(0.9600)">Fondo</div>
<div class="st" style="left:593.0px;--w:26.0px;transform:scaleX(0.9714)">Diseño</div>
<div class="st" style="left:633.0px;--w:21.0px;transform:scaleX(0.9993)">Tema</div>
<div class="st" style="left:669.0px;--w:39.0px;transform:scaleX(0.9917)">Transición</div>
<svg class="c" style="left:1085px;top:218px" width="10" height="10" viewBox="0 0 10 10"><path d="M1 1.200 L8.600 3.800 L5.400 5.200 L4.200 8.600 Z" fill="none" stroke="#1f1f1f" stroke-width="1" stroke-linejoin="round"/></svg>
<svg class="c" style="left:1099.5px;top:222px" width="6" height="4" viewBox="0 0 6 4"><path d="M.4 .4 H5.600 L3 3.400 Z" fill="#444746"/></svg>
<svg class="c" style="left:1112px;top:220.500px" width="8" height="6" viewBox="0 0 8 6"><path d="M.8 1 L4 4.400 L7.200 1" stroke="#1f1f1f" stroke-width="1.100" fill="none"/></svg>
<div class="c" style="left:186.300px;top:250.300px;width:944.700px;height:1px;background:#d5d8dc"></div>
<div class="c" style="left:186.300px;top:250.300px;width:1px;height:398px;background:#d5d8dc"></div>
<svg class="c" style="left:0;top:0" width="1365" height="767" viewBox="0 0 1365 767"><g stroke="#80868b" stroke-width=".6"><path d="M362 249.700 H966" /><path d="M362.2 249.700 v-4.0"/><path d="M367.8 249.700 v-1.8"/><path d="M373.5 249.700 v-1.8"/><path d="M379.1 249.700 v-1.8"/><path d="M384.8 249.700 v-3.0"/><path d="M390.4 249.700 v-1.8"/><path d="M396.1 249.700 v-1.8"/><path d="M401.7 249.700 v-1.8"/><path d="M407.4 249.700 v-4.0"/><path d="M413.1 249.700 v-1.8"/><path d="M418.7 249.700 v-1.8"/><path d="M424.4 249.700 v-1.8"/><path d="M430.0 249.700 v-3.0"/><path d="M435.7 249.700 v-1.8"/><path d="M441.3 249.700 v-1.8"/><path d="M447.0 249.700 v-1.8"/><path d="M452.6 249.700 v-4.0"/><path d="M458.3 249.700 v-1.8"/><path d="M463.9 249.700 v-1.8"/><path d="M469.6 249.700 v-1.8"/><path d="M475.3 249.700 v-3.0"/><path d="M480.9 249.700 v-1.8"/><path d="M486.6 249.700 v-1.8"/><path d="M492.2 249.700 v-1.8"/><path d="M497.9 249.700 v-4.0"/><path d="M503.5 249.700 v-1.8"/><path d="M509.2 249.700 v-1.8"/><path d="M514.8 249.700 v-1.8"/><path d="M520.5 249.700 v-3.0"/><path d="M526.2 249.700 v-1.8"/><path d="M531.8 249.700 v-1.8"/><path d="M537.5 249.700 v-1.8"/><path d="M543.1 249.700 v-4.0"/><path d="M548.8 249.700 v-1.8"/><path d="M554.4 249.700 v-1.8"/><path d="M560.1 249.700 v-1.8"/><path d="M565.7 249.700 v-3.0"/><path d="M571.4 249.700 v-1.8"/><path d="M577.0 249.700 v-1.8"/><path d="M582.7 249.700 v-1.8"/><path d="M588.4 249.700 v-4.0"/><path d="M594.0 249.700 v-1.8"/><path d="M599.7 249.700 v-1.8"/><path d="M605.3 249.700 v-1.8"/><path d="M611.0 249.700 v-3.0"/><path d="M616.6 249.700 v-1.8"/><path d="M622.3 249.700 v-1.8"/><path d="M627.9 249.700 v-1.8"/><path d="M633.6 249.700 v-4.0"/><path d="M639.3 249.700 v-1.8"/><path d="M644.9 249.700 v-1.8"/><path d="M650.6 249.700 v-1.8"/><path d="M656.2 249.700 v-3.0"/><path d="M661.9 249.700 v-1.8"/><path d="M667.5 249.700 v-1.8"/><path d="M673.2 249.700 v-1.8"/><path d="M678.8 249.700 v-4.0"/><path d="M684.5 249.700 v-1.8"/><path d="M690.1 249.700 v-1.8"/><path d="M695.8 249.700 v-1.8"/><path d="M701.5 249.700 v-3.0"/><path d="M707.1 249.700 v-1.8"/><path d="M712.8 249.700 v-1.8"/><path d="M718.4 249.700 v-1.8"/><path d="M724.1 249.700 v-4.0"/><path d="M729.7 249.700 v-1.8"/><path d="M735.4 249.700 v-1.8"/><path d="M741.0 249.700 v-1.8"/><path d="M746.7 249.700 v-3.0"/><path d="M752.4 249.700 v-1.8"/><path d="M758.0 249.700 v-1.8"/><path d="M763.7 249.700 v-1.8"/><path d="M769.3 249.700 v-4.0"/><path d="M775.0 249.700 v-1.8"/><path d="M780.6 249.700 v-1.8"/><path d="M786.3 249.700 v-1.8"/><path d="M791.9 249.700 v-3.0"/><path d="M797.6 249.700 v-1.8"/><path d="M803.2 249.700 v-1.8"/><path d="M808.9 249.700 v-1.8"/><path d="M814.6 249.700 v-4.0"/><path d="M820.2 249.700 v-1.8"/><path d="M825.9 249.700 v-1.8"/><path d="M831.5 249.700 v-1.8"/><path d="M837.2 249.700 v-3.0"/><path d="M842.8 249.700 v-1.8"/><path d="M848.5 249.700 v-1.8"/><path d="M854.1 249.700 v-1.8"/><path d="M859.8 249.700 v-4.0"/><path d="M865.5 249.700 v-1.8"/><path d="M871.1 249.700 v-1.8"/><path d="M876.8 249.700 v-1.8"/><path d="M882.4 249.700 v-3.0"/><path d="M888.1 249.700 v-1.8"/><path d="M893.7 249.700 v-1.8"/><path d="M899.4 249.700 v-1.8"/><path d="M905.0 249.700 v-4.0"/><path d="M910.7 249.700 v-1.8"/><path d="M916.4 249.700 v-1.8"/><path d="M922.0 249.700 v-1.8"/><path d="M927.7 249.700 v-3.0"/><path d="M933.3 249.700 v-1.8"/><path d="M939.0 249.700 v-1.8"/><path d="M944.6 249.700 v-1.8"/><path d="M950.3 249.700 v-4.0"/><path d="M955.9 249.700 v-1.8"/><path d="M961.6 249.700 v-1.8"/><path d="M186 280.500 V619"/><path d="M186 280.5 h-4.0"/><path d="M186 286.2 h-1.8"/><path d="M186 291.8 h-1.8"/><path d="M186 297.5 h-1.8"/><path d="M186 303.1 h-3.0"/><path d="M186 308.8 h-1.8"/><path d="M186 314.4 h-1.8"/><path d="M186 320.1 h-1.8"/><path d="M186 325.7 h-4.0"/><path d="M186 331.4 h-1.8"/><path d="M186 337.1 h-1.8"/><path d="M186 342.7 h-1.8"/><path d="M186 348.4 h-3.0"/><path d="M186 354.0 h-1.8"/><path d="M186 359.7 h-1.8"/><path d="M186 365.3 h-1.8"/><path d="M186 371.0 h-4.0"/><path d="M186 376.6 h-1.8"/><path d="M186 382.3 h-1.8"/><path d="M186 387.9 h-1.8"/><path d="M186 393.6 h-3.0"/><path d="M186 399.3 h-1.8"/><path d="M186 404.9 h-1.8"/><path d="M186 410.6 h-1.8"/><path d="M186 416.2 h-4.0"/><path d="M186 421.9 h-1.8"/><path d="M186 427.5 h-1.8"/><path d="M186 433.2 h-1.8"/><path d="M186 438.8 h-3.0"/><path d="M186 444.5 h-1.8"/><path d="M186 450.2 h-1.8"/><path d="M186 455.8 h-1.8"/><path d="M186 461.5 h-4.0"/><path d="M186 467.1 h-1.8"/><path d="M186 472.8 h-1.8"/><path d="M186 478.4 h-1.8"/><path d="M186 484.1 h-3.0"/><path d="M186 489.7 h-1.8"/><path d="M186 495.4 h-1.8"/><path d="M186 501.0 h-1.8"/><path d="M186 506.7 h-4.0"/><path d="M186 512.4 h-1.8"/><path d="M186 518.0 h-1.8"/><path d="M186 523.7 h-1.8"/><path d="M186 529.3 h-3.0"/><path d="M186 535.0 h-1.8"/><path d="M186 540.6 h-1.8"/><path d="M186 546.3 h-1.8"/><path d="M186 551.9 h-4.0"/><path d="M186 557.6 h-1.8"/><path d="M186 563.2 h-1.8"/><path d="M186 568.9 h-1.8"/><path d="M186 574.6 h-3.0"/><path d="M186 580.2 h-1.8"/><path d="M186 585.9 h-1.8"/><path d="M186 591.5 h-1.8"/><path d="M186 597.2 h-4.0"/><path d="M186 602.8 h-1.8"/><path d="M186 608.5 h-1.8"/><path d="M186 614.1 h-1.8"/></g><g font-family="Liberation Sans, sans-serif" font-size="7.200" fill="#3c4043" text-anchor="middle"><text x="408.9" y="247">1</text><text x="454.1" y="247">2</text><text x="499.4" y="247">3</text><text x="544.6" y="247">4</text><text x="589.9" y="247">5</text><text x="635.1" y="247">6</text><text x="680.3" y="247">7</text><text x="725.6" y="247">8</text><text x="770.8" y="247">9</text><text x="814.6" y="247">10</text><text x="859.8" y="247">11</text><text x="905.0" y="247">12</text><text x="950.3" y="247">13</text><text transform="translate(181.500 327.7) rotate(-90)">1</text><text transform="translate(181.500 373.0) rotate(-90)">2</text><text transform="translate(181.500 418.2) rotate(-90)">3</text><text transform="translate(181.500 463.5) rotate(-90)">4</text><text transform="translate(181.500 508.7) rotate(-90)">5</text><text transform="translate(181.500 553.9) rotate(-90)">6</text><text transform="translate(181.500 599.2) rotate(-90)">7</text></g></svg>
<div class="c" style="left:176.600px;top:648.500px;width:1011.400px;height:12.200px;background:#f8f9fa"></div>
<div class="c" style="left:1150.700px;top:374.500px;width:27.800px;height:25px;border-radius:10px;background:#f0f3f8"></div>
<div class="c" style="left:1150.700px;top:405px;width:27.800px;height:56px;border-radius:12px;background:#f2f4f9"></div>
<div class="c" style="left:1150.700px;top:466.500px;width:27.800px;height:60px;border-radius:12px;background:#f2f4f9"></div>
<svg class="c" style="left:1157.500px;top:380.500px" width="14" height="14" viewBox="0 0 14 14"><path d="M6.600 1.800 C7.400 1.600 8 2 8 2.800 C9 6.600 6.800 10.600 2.400 12 C1.600 12.200 1 11.600 1.400 11 C4.600 9.400 6.200 6.200 6.200 2.600 C6.200 2.200 6.300 1.900 6.600 1.800 Z" fill="#f2a21c"/><path d="M2 11.600 C5 10.400 7 7.800 7.400 4.400" fill="none" stroke="#fbd36b" stroke-width=".8"/><path d="M10.800 1 L11.400 2.800 L13.200 3.400 L11.400 4 L10.800 5.800 L10.200 4 L8.400 3.400 L10.200 2.800 Z" fill="#f5b21e"/></svg>
<svg class="c" style="left:1159px;top:416px" width="11" height="11" viewBox="0 0 11 11" fill="none" stroke="#3c4043" stroke-width="1"><path d="M5 1.400 H1.200 V9.800 H9.600 V6"/><circle cx="8" cy="3" r="1.800"/><path d="M9.300 4.300 L10.600 5.600 M2.600 8 L4.400 6 L5.600 7.200 L6.600 6.400 L8 8 Z"/></svg>
<svg class="c" style="left:1159px;top:442.500px" width="11" height="9" viewBox="0 0 11 9" fill="none" stroke="#3c4043" stroke-width="1"><path d="M.8 1.400 a.6 .6 0 0 1 .6 -.6 H4 L5 2 H9.600 a.6 .6 0 0 1 .6 .6 V7.600 a.6 .6 0 0 1 -.6 .6 H1.400 a.6 .6 0 0 1 -.6 -.6 Z"/></svg>
<svg class="c" style="left:1159px;top:479px" width="11" height="10" viewBox="0 0 11 10" fill="none" stroke="#3c4043" stroke-width="1"><path d="M9.600 5 V8.800 H1 V1 H9.600 V2.600"/><path d="M4 3.200 L6.800 5 L4 6.800 Z"/></svg>
<svg class="c" style="left:1159px;top:504px" width="11" height="11" viewBox="0 0 11 11"><circle cx="5.500" cy="5.500" r="4.600" fill="none" stroke="#b4b7bb" stroke-width="1"/><circle cx="5.500" cy="5.500" r="2.500" fill="#b4b7bb"/></svg>
<div class="c" style="left:361.500px;top:279.800px;width:604.500px;height:339.200px;background:linear-gradient(135deg,#f2f6fb 0,#f6f8fc 35%,#f7f8fb 100%);border-left:1px solid #d3d6da;border-top:1px solid #d9dce0"></div>
<svg class="c" style="left:362px;top:280.500px" width="604" height="338.500" viewBox="362 280.500 604 338.500">
<defs>
<radialGradient id="imgbg" cx=".5" cy=".55" r=".75"><stop offset="0" stop-color="#215a80"/><stop offset=".5" stop-color="#133650"/><stop offset="1" stop-color="#0b1d30"/></radialGradient>
<radialGradient id="brn" cx=".45" cy=".4" r=".7"><stop offset="0" stop-color="#8fd0f2"/><stop offset=".55" stop-color="#4a97c9"/><stop offset="1" stop-color="#235f92"/></radialGradient>
<radialGradient id="glw" cx=".5" cy=".5" r=".5"><stop offset="0" stop-color="#bfeaff" stop-opacity=".95"/><stop offset=".5" stop-color="#5cc0ee" stop-opacity=".5"/><stop offset="1" stop-color="#5cc0ee" stop-opacity="0"/></radialGradient>
<radialGradient id="gold" cx=".5" cy=".5" r=".5"><stop offset="0" stop-color="#ffe9a8" stop-opacity=".95"/><stop offset="1" stop-color="#ffe9a8" stop-opacity="0"/></radialGradient>
<radialGradient id="bl" cx=".5" cy=".5" r=".5"><stop offset="0" stop-color="#6fb6ea" stop-opacity=".9"/><stop offset="1" stop-color="#6fb6ea" stop-opacity="0"/></radialGradient>
<filter id="sb"><feGaussianBlur stdDeviation=".6"/></filter>
<filter id="sb2"><feGaussianBlur stdDeviation="1.600"/></filter>
<clipPath id="imgc"><rect x="678" y="398.500" width="259.700" height="177.500"/></clipPath>
</defs>
<g fill="none" stroke-width=".8" opacity=".95"><path d="M771.0 398 V374.0 L781.0 364.0 V352.0" stroke="#a9bccb"/><circle cx="781.0" cy="350.4" r="1.600" stroke="#a9bccb" fill="#f6f8fc"/><path d="M782.0 398 V366.0 L796.0 352.0 V344.0" stroke="#d9caa6"/><circle cx="796.0" cy="342.4" r="1.600" stroke="#d9caa6" fill="#f6f8fc"/><path d="M793.0 398 V374.0 L803.0 364.0 V352.0" stroke="#a9bccb"/><circle cx="803.0" cy="350.4" r="1.600" stroke="#a9bccb" fill="#f6f8fc"/><path d="M804.0 398 V382.0 L814.0 372.0 V360.0" stroke="#d9caa6"/><circle cx="814.0" cy="358.4" r="1.600" stroke="#d9caa6" fill="#f6f8fc"/><path d="M812.0 398 V370.0 L826.0 356.0 V348.0" stroke="#a9bccb"/><circle cx="826.0" cy="346.4" r="1.600" stroke="#a9bccb" fill="#f6f8fc"/><path d="M822.0 398 V360.0 L836.0 346.0 V338.0" stroke="#d9caa6"/><circle cx="836.0" cy="336.4" r="1.600" stroke="#d9caa6" fill="#f6f8fc"/><path d="M832.0 398 V374.0 L826.0 368.0 V352.0" stroke="#a9bccb"/><circle cx="826.0" cy="350.4" r="1.600" stroke="#a9bccb" fill="#f6f8fc"/><path d="M843.0 398 V366.0 L837.0 360.0 V344.0" stroke="#d9caa6"/><circle cx="837.0" cy="342.4" r="1.600" stroke="#d9caa6" fill="#f6f8fc"/><path d="M853.0 398 V378.0 L867.0 364.0 V356.0" stroke="#a9bccb"/><circle cx="867.0" cy="354.4" r="1.600" stroke="#a9bccb" fill="#f6f8fc"/><path d="M864.0 398 V370.0 L874.0 360.0 V348.0" stroke="#d9caa6"/><circle cx="874.0" cy="346.4" r="1.600" stroke="#d9caa6" fill="#f6f8fc"/><path d="M875.0 398 V382.0 L889.0 368.0 V360.0" stroke="#a9bccb"/><circle cx="889.0" cy="358.4" r="1.600" stroke="#a9bccb" fill="#f6f8fc"/><path d="M886.0 398 V374.0 L880.0 368.0 V352.0" stroke="#d9caa6"/><circle cx="880.0" cy="350.4" r="1.600" stroke="#d9caa6" fill="#f6f8fc"/><path d="M897.0 398 V384.0 L887.0 374.0 V362.0" stroke="#a9bccb"/><circle cx="887.0" cy="360.4" r="1.600" stroke="#a9bccb" fill="#f6f8fc"/><path d="M738 576 V593.0 L738.0 593.0 V610.0" stroke="#a9bccb"/><circle cx="738.0" cy="611.5" r="1.500" stroke="#a9bccb" fill="#f6f8fc"/><path d="M747 576 V587.0 L739.0 595.0 V606.0" stroke="#d9caa6"/><path d="M756 576 V595.0 L748.0 603.0 V622.0" stroke="#d9caa6"/><circle cx="748.0" cy="623.5" r="1.500" stroke="#d9caa6" fill="#f6f8fc"/><path d="M765 576 V595.0 L770.0 600.0 V619.0" stroke="#a9bccb"/><path d="M774 576 V593.0 L782.0 601.0 V618.0" stroke="#d9caa6"/><circle cx="782.0" cy="619.5" r="1.500" stroke="#d9caa6" fill="#f6f8fc"/><path d="M783 576 V587.0 L791.0 595.0 V606.0" stroke="#d9caa6"/><path d="M792 576 V584.0 L800.0 592.0 V600.0" stroke="#a9bccb"/><circle cx="800.0" cy="601.5" r="1.500" stroke="#a9bccb" fill="#f6f8fc"/><path d="M801 576 V584.0 L793.0 592.0 V600.0" stroke="#d9caa6"/><path d="M810 576 V584.0 L805.0 589.0 V597.0" stroke="#d9caa6"/><circle cx="805.0" cy="598.5" r="1.500" stroke="#d9caa6" fill="#f6f8fc"/><path d="M819 576 V587.0 L827.0 595.0 V606.0" stroke="#a9bccb"/><path d="M828 576 V584.0 L833.0 589.0 V597.0" stroke="#d9caa6"/><circle cx="833.0" cy="598.5" r="1.500" stroke="#d9caa6" fill="#f6f8fc"/><path d="M837 576 V590.0 L842.0 595.0 V609.0" stroke="#d9caa6"/><path d="M846 576 V595.0 L841.0 600.0 V619.0" stroke="#a9bccb"/><circle cx="841.0" cy="620.5" r="1.500" stroke="#a9bccb" fill="#f6f8fc"/><path d="M855 576 V595.0 L850.0 600.0 V619.0" stroke="#d9caa6"/><path d="M864 576 V590.0 L869.0 595.0 V609.0" stroke="#d9caa6"/><circle cx="869.0" cy="610.5" r="1.500" stroke="#d9caa6" fill="#f6f8fc"/><path d="M873 576 V584.0 L865.0 592.0 V600.0" stroke="#a9bccb"/><path d="M882 576 V593.0 L882.0 593.0 V610.0" stroke="#d9caa6"/><circle cx="882.0" cy="611.5" r="1.500" stroke="#d9caa6" fill="#f6f8fc"/><path d="M891 576 V593.0 L899.0 601.0 V618.0" stroke="#d9caa6"/><path d="M938 402 H942.0 L947.0 407.0 H966" stroke="#a9bccb"/><path d="M938 410 H945.2 L950.2 405.0 H966" stroke="#d9caa6"/><path d="M938 418 H945.2 L953.2 410.0 H966" stroke="#a9bccb"/><path d="M938 426 H942.0 L950.0 418.0 H966" stroke="#d9caa6"/><path d="M938 434 H946.8 L954.8 426.0 H966" stroke="#a9bccb"/><path d="M938 442 H945.2 L953.2 450.0 H966" stroke="#d9caa6"/><path d="M938 450 H942.0 L950.0 442.0 H966" stroke="#a9bccb"/><path d="M938 458 H942.0 L947.0 453.0 H966" stroke="#d9caa6"/><path d="M938 466 H943.6 L951.6 458.0 H966" stroke="#a9bccb"/><path d="M938 474 H946.8 L954.8 482.0 H966" stroke="#d9caa6"/><path d="M938 482 H946.8 L954.8 490.0 H966" stroke="#a9bccb"/><path d="M938 490 H942.0 L947.0 485.0 H966" stroke="#d9caa6"/><path d="M938 498 H945.2 L950.2 503.0 H966" stroke="#a9bccb"/><path d="M938 506 H942.0 L947.0 511.0 H966" stroke="#d9caa6"/><path d="M938 514 H945.2 L953.2 506.0 H966" stroke="#a9bccb"/><path d="M938 522 H946.8 L954.8 514.0 H966" stroke="#d9caa6"/><path d="M938 530 H943.6 L948.6 525.0 H966" stroke="#a9bccb"/><path d="M938 538 H942.0 L950.0 530.0 H966" stroke="#d9caa6"/><path d="M938 546 H942.0 L950.0 554.0 H966" stroke="#a9bccb"/><path d="M938 554 H946.8 L951.8 549.0 H966" stroke="#d9caa6"/><path d="M938 562 H943.6 L951.6 570.0 H966" stroke="#a9bccb"/><path d="M938 570 H943.6 L948.6 565.0 H966" stroke="#d9caa6"/><path d="M678 396 H664 L654 386 H636" stroke="#b3c4d1"/><circle cx="634" cy="386" r="1.500" stroke="#b3c4d1" fill="#f6f8fc"/><path d="M678 408 H664 L654 398 H639" stroke="#d9caa6"/><circle cx="637" cy="398" r="1.500" stroke="#d9caa6" fill="#f6f8fc"/><path d="M678 422 H664 L654 412 H642" stroke="#b3c4d1"/><circle cx="640" cy="412" r="1.500" stroke="#b3c4d1" fill="#f6f8fc"/><path d="M678 434 H664 L654 424 H645" stroke="#d9caa6"/><circle cx="643" cy="424" r="1.500" stroke="#d9caa6" fill="#f6f8fc"/><path d="M678 536 H664 L654 526 H648" stroke="#b3c4d1"/><circle cx="646" cy="526" r="1.500" stroke="#b3c4d1" fill="#f6f8fc"/><path d="M678 548 H664 L654 538 H651" stroke="#d9caa6"/><circle cx="649" cy="538" r="1.500" stroke="#d9caa6" fill="#f6f8fc"/><path d="M678 560 H664 L654 550 H654" stroke="#b3c4d1"/><circle cx="652" cy="550" r="1.500" stroke="#b3c4d1" fill="#f6f8fc"/></g>
<g fill="none" stroke-width=".8" opacity=".95"><path d="M905 398 V376 L913 368 V350" stroke="#a9bccb"/><circle cx="913" cy="348.5" r="1.500" stroke="#a9bccb" fill="#f6f8fc"/><path d="M914 398 V368 L922 360 V342" stroke="#d9caa6"/><path d="M922 398 V382 L930 374 V356" stroke="#a9bccb"/><circle cx="930" cy="354.5" r="1.500" stroke="#a9bccb" fill="#f6f8fc"/><path d="M931 398 V372 L939 364 V346" stroke="#d9caa6"/><path d="M940 398 V386 L948 378 V360" stroke="#a9bccb"/><circle cx="948" cy="358.5" r="1.500" stroke="#a9bccb" fill="#f6f8fc"/><path d="M949 398 V378 L957 370 V352" stroke="#d9caa6"/><path d="M958 398 V392 L966 384 V366" stroke="#a9bccb"/><circle cx="966" cy="364.5" r="1.500" stroke="#a9bccb" fill="#f6f8fc"/><path d="M904 576 V589 L910 595 V608" stroke="#a9bccb"/><path d="M912 576 V589 L918 595 V608" stroke="#d9caa6"/><path d="M920 576 V583 L926 589 V596" stroke="#a9bccb"/><path d="M928 576 V592 L934 598 V614" stroke="#d9caa6"/><path d="M936 576 V586 L942 592 V602" stroke="#a9bccb"/><path d="M944 576 V583 L950 589 V596" stroke="#d9caa6"/><path d="M952 576 V586 L958 592 V602" stroke="#a9bccb"/><path d="M960 576 V583 L966 589 V596" stroke="#d9caa6"/><path d="M930 582 H940 L946 588 H966" stroke="#a9bccb"/><path d="M930 589 H943 L949 595 H966" stroke="#d9caa6"/><path d="M930 596 H946 L952 602 H966" stroke="#a9bccb"/><path d="M930 603 H949 L955 609 H966" stroke="#d9caa6"/><path d="M930 610 H952 L958 616 H966" stroke="#a9bccb"/></g><ellipse cx="752" cy="382" rx="70" ry="40" fill="url(#bl)" opacity=".45"/><ellipse cx="700" cy="430" rx="40" ry="50" fill="url(#bl)" opacity=".3"/><g fill="none" stroke="#9fcfee" stroke-width=".7" opacity=".75" transform="rotate(-22 757 457)"><ellipse cx="757" cy="457" rx="76.8" ry="96"/><ellipse cx="757" cy="457" rx="48.0" ry="96"/><ellipse cx="757" cy="457" rx="19.2" ry="96"/><ellipse cx="757" cy="457" rx="14.4" ry="96"/><ellipse cx="757" cy="457" rx="48.0" ry="96"/><ellipse cx="757" cy="457" rx="76.8" ry="96"/><ellipse cx="757" cy="389.8" rx="68.6" ry="12.3"/><ellipse cx="757" cy="423.4" rx="89.9" ry="16.2"/><ellipse cx="757" cy="457.0" rx="96.0" ry="17.3"/><ellipse cx="757" cy="490.6" rx="89.9" ry="16.2"/><ellipse cx="757" cy="524.2" rx="68.6" ry="12.3"/><circle cx="757" cy="457" r="96"/></g>
<g stroke="#8cc4ea" stroke-width=".6" opacity=".7"><path d="M661.7 449.9 L712.7 455.1"/><path d="M806.4 397.2 L744.0 391.6"/><path d="M784.5 429.1 L795.2 380.9"/><path d="M706.6 399.0 L694.5 438.1"/><path d="M720.0 447.5 L727.9 417.9"/><path d="M700.9 388.1 L731.4 395.6"/><path d="M692.4 503.8 L687.1 482.6"/><path d="M743.0 520.8 L717.6 466.6"/><path d="M695.1 393.2 L700.9 388.1"/><path d="M721.1 406.7 L706.5 428.2"/><path d="M690.2 498.2 L733.7 507.0"/><path d="M706.5 428.2 L690.1 425.7"/><path d="M666.3 441.2 L696.8 433.2"/><path d="M690.1 425.7 L661.7 449.9"/><path d="M714.6 514.8 L715.8 509.1"/><path d="M729.5 519.0 L732.3 513.7"/><path d="M687.1 482.6 L692.4 503.8"/><path d="M786.0 421.4 L744.3 407.4"/><path d="M677.2 407.7 L693.0 389.8"/><path d="M693.0 389.8 L691.7 446.0"/><path d="M727.5 423.9 L715.9 439.4"/><path d="M732.3 513.7 L714.6 514.8"/></g>
<g fill="#7dbde8"><circle cx="691.7" cy="446.0" r="0.9"/><circle cx="661.7" cy="449.9" r="1.6"/><circle cx="742.7" cy="546.2" r="1.6"/><circle cx="806.4" cy="397.2" r="1.6"/><circle cx="784.5" cy="429.1" r="0.9"/><circle cx="684.2" cy="519.3" r="1.2"/><circle cx="706.6" cy="399.0" r="1.2"/><circle cx="741.4" cy="504.8" r="0.9"/><circle cx="720.0" cy="447.5" r="1.6"/><circle cx="700.9" cy="388.1" r="1.2"/><circle cx="712.7" cy="455.1" r="0.9"/><circle cx="692.4" cy="503.8" r="1.2"/><circle cx="743.0" cy="520.8" r="0.9"/><circle cx="727.9" cy="417.9" r="1.2"/><circle cx="695.1" cy="393.2" r="1.6"/><circle cx="715.8" cy="509.1" r="0.9"/><circle cx="721.1" cy="406.7" r="1.6"/><circle cx="690.2" cy="498.2" r="1.6"/><circle cx="744.3" cy="407.4" r="1.2"/><circle cx="713.5" cy="395.1" r="1.2"/><circle cx="731.4" cy="395.6" r="1.6"/><circle cx="715.9" cy="439.4" r="0.9"/><circle cx="741.4" cy="501.7" r="1.6"/><circle cx="706.5" cy="428.2" r="0.9"/><circle cx="744.0" cy="391.6" r="0.9"/><circle cx="666.3" cy="441.2" r="0.9"/><circle cx="690.1" cy="425.7" r="1.6"/><circle cx="804.1" cy="374.4" r="0.9"/><circle cx="714.6" cy="514.8" r="1.2"/><circle cx="717.8" cy="388.7" r="1.2"/><circle cx="733.7" cy="507.0" r="1.6"/><circle cx="795.2" cy="380.9" r="1.2"/><circle cx="729.5" cy="519.0" r="1.2"/><circle cx="719.8" cy="476.1" r="1.6"/><circle cx="687.1" cy="482.6" r="1.6"/><circle cx="786.0" cy="421.4" r="1.6"/><circle cx="713.0" cy="511.5" r="1.2"/><circle cx="673.8" cy="470.9" r="1.2"/><circle cx="677.2" cy="407.7" r="1.2"/><circle cx="693.0" cy="389.8" r="1.6"/><circle cx="696.8" cy="433.2" r="0.9"/><circle cx="717.6" cy="466.6" r="1.6"/><circle cx="727.5" cy="423.9" r="1.6"/><circle cx="732.3" cy="513.7" r="0.9"/><circle cx="729.5" cy="491.6" r="1.2"/><circle cx="694.5" cy="438.1" r="1.6"/></g>
<circle cx="650" cy="401" r="9" fill="url(#bl)"/><circle cx="650" cy="401" r="2.600" fill="#5aa7e2"/>
<circle cx="628" cy="444" r="12" fill="url(#gold)"/><circle cx="676" cy="478" r="9" fill="url(#gold)"/><circle cx="944" cy="392" r="11" fill="url(#gold)"/><circle cx="900" cy="390" r="8" fill="url(#gold)"/><circle cx="948" cy="430" r="9" fill="url(#gold)"/><circle cx="668" cy="548" r="8" fill="url(#gold)"/>
<rect x="677" y="398" width="261.500" height="179" fill="#0a1a2b" opacity=".35" filter="url(#sb2)"/>
<rect x="678" y="398.500" width="259.700" height="177.500" fill="url(#imgbg)"/>
<g clip-path="url(#imgc)">
<rect x="678" y="398.500" width="260" height="46" fill="#0b2035" opacity=".6"/><rect x="678" y="398.500" width="70" height="178" fill="#4f9fd4" opacity=".22"/>
<rect x="900" y="398.500" width="38" height="178" fill="#0b2136" opacity=".55"/>
<rect x="678" y="535" width="260" height="41" fill="#0d2a43" opacity=".5"/>
<g fill="none" stroke="#7fd0ff" stroke-width=".7" opacity=".55" transform="rotate(-22 757 457)"><ellipse cx="757" cy="457" rx="76.8" ry="96"/><ellipse cx="757" cy="457" rx="48.0" ry="96"/><ellipse cx="757" cy="457" rx="19.2" ry="96"/><ellipse cx="757" cy="457" rx="14.4" ry="96"/><ellipse cx="757" cy="457" rx="48.0" ry="96"/><ellipse cx="757" cy="457" rx="76.8" ry="96"/><ellipse cx="757" cy="389.8" rx="68.6" ry="12.3"/><ellipse cx="757" cy="423.4" rx="89.9" ry="16.2"/><ellipse cx="757" cy="457.0" rx="96.0" ry="17.3"/><ellipse cx="757" cy="490.6" rx="89.9" ry="16.2"/><ellipse cx="757" cy="524.2" rx="68.6" ry="12.3"/><circle cx="757" cy="457" r="96"/></g>
<g stroke="#9fe0ff" stroke-width=".6" opacity=".8"><path d="M661.7 449.9 L712.7 455.1"/><path d="M806.4 397.2 L744.0 391.6"/><path d="M784.5 429.1 L795.2 380.9"/><path d="M706.6 399.0 L694.5 438.1"/><path d="M720.0 447.5 L727.9 417.9"/><path d="M700.9 388.1 L731.4 395.6"/><path d="M692.4 503.8 L687.1 482.6"/><path d="M743.0 520.8 L717.6 466.6"/><path d="M695.1 393.2 L700.9 388.1"/><path d="M721.1 406.7 L706.5 428.2"/><path d="M690.2 498.2 L733.7 507.0"/><path d="M706.5 428.2 L690.1 425.7"/><path d="M666.3 441.2 L696.8 433.2"/><path d="M690.1 425.7 L661.7 449.9"/><path d="M714.6 514.8 L715.8 509.1"/><path d="M729.5 519.0 L732.3 513.7"/><path d="M687.1 482.6 L692.4 503.8"/><path d="M786.0 421.4 L744.3 407.4"/><path d="M677.2 407.7 L693.0 389.8"/><path d="M693.0 389.8 L691.7 446.0"/><path d="M727.5 423.9 L715.9 439.4"/><path d="M732.3 513.7 L714.6 514.8"/></g>
<g fill="#d6f3ff"><circle cx="691.7" cy="446.0" r="0.9"/><circle cx="661.7" cy="449.9" r="1.2"/><circle cx="742.7" cy="546.2" r="0.9"/><circle cx="806.4" cy="397.2" r="0.9"/><circle cx="784.5" cy="429.1" r="1.5"/><circle cx="684.2" cy="519.3" r="0.9"/><circle cx="706.6" cy="399.0" r="1.2"/><circle cx="741.4" cy="504.8" r="1.5"/><circle cx="720.0" cy="447.5" r="1.5"/><circle cx="700.9" cy="388.1" r="1.2"/><circle cx="712.7" cy="455.1" r="1.2"/><circle cx="692.4" cy="503.8" r="0.9"/><circle cx="743.0" cy="520.8" r="1.2"/><circle cx="727.9" cy="417.9" r="1.2"/><circle cx="695.1" cy="393.2" r="0.9"/><circle cx="715.8" cy="509.1" r="1.5"/><circle cx="721.1" cy="406.7" r="1.5"/><circle cx="690.2" cy="498.2" r="0.9"/><circle cx="744.3" cy="407.4" r="1.5"/><circle cx="713.5" cy="395.1" r="0.9"/><circle cx="731.4" cy="395.6" r="1.2"/><circle cx="715.9" cy="439.4" r="1.5"/><circle cx="741.4" cy="501.7" r="1.2"/><circle cx="706.5" cy="428.2" r="1.2"/><circle cx="744.0" cy="391.6" r="0.9"/><circle cx="666.3" cy="441.2" r="1.2"/><circle cx="690.1" cy="425.7" r="1.2"/><circle cx="804.1" cy="374.4" r="1.5"/><circle cx="714.6" cy="514.8" r="1.2"/><circle cx="717.8" cy="388.7" r="0.9"/><circle cx="733.7" cy="507.0" r="1.5"/><circle cx="795.2" cy="380.9" r="1.2"/><circle cx="729.5" cy="519.0" r="0.9"/><circle cx="719.8" cy="476.1" r="0.9"/><circle cx="687.1" cy="482.6" r="1.2"/><circle cx="786.0" cy="421.4" r="0.9"/><circle cx="713.0" cy="511.5" r="1.5"/><circle cx="673.8" cy="470.9" r="1.2"/><circle cx="677.2" cy="407.7" r="0.9"/><circle cx="693.0" cy="389.8" r="0.9"/><circle cx="696.8" cy="433.2" r="0.9"/><circle cx="717.6" cy="466.6" r="1.2"/><circle cx="727.5" cy="423.9" r="1.2"/><circle cx="732.3" cy="513.7" r="0.9"/><circle cx="729.5" cy="491.6" r="1.5"/><circle cx="694.5" cy="438.1" r="0.9"/></g>
<g stroke="#4fb3e6" stroke-width=".7" opacity=".8" fill="none"><path d="M722 412 H760"/><path d="M760 412 H805"/><path d="M812 408 H850"/><path d="M850 412 H880"/><path d="M880 405 H920"/><path d="M735 408 V430"/><path d="M770 408 V420"/><path d="M815 408 V420"/><path d="M856 408 V430"/><path d="M890 408 V430"/><path d="M908 408 V430"/></g>
<circle cx="757" cy="416" r="6.0" fill="#1c6590" stroke="#7fd6ff" stroke-width=".9"/><circle cx="757" cy="416" r="2.3" fill="#bfefff" opacity=".85"/>
<circle cx="814" cy="416" r="7.0" fill="#1c6590" stroke="#7fd6ff" stroke-width=".9"/><circle cx="814" cy="416" r="2.7" fill="#bfefff" opacity=".85"/>
<circle cx="856" cy="416" r="5.5" fill="#1c6590" stroke="#7fd6ff" stroke-width=".9"/><circle cx="856" cy="416" r="2.1" fill="#bfefff" opacity=".85"/>
<circle cx="720" cy="428" r="5.0" fill="#1c6590" stroke="#7fd6ff" stroke-width=".9"/><circle cx="720" cy="428" r="1.9" fill="#bfefff" opacity=".85"/>
<circle cx="891" cy="426" r="4.5" fill="#1c6590" stroke="#7fd6ff" stroke-width=".9"/><circle cx="891" cy="426" r="1.7" fill="#bfefff" opacity=".85"/>
<circle cx="720" cy="470" r="4.0" fill="#1c6590" stroke="#7fd6ff" stroke-width=".9"/><circle cx="720" cy="470" r="1.5" fill="#bfefff" opacity=".85"/>
<circle cx="889" cy="470" r="4.0" fill="#1c6590" stroke="#7fd6ff" stroke-width=".9"/><circle cx="889" cy="470" r="1.5" fill="#bfefff" opacity=".85"/>
<rect x="744" y="435" width="9" height="7" fill="none" stroke="#7fd6ff" stroke-width=".8"/><path d="M744 438.5 h9 M748.5 435 v7" stroke="#7fd6ff" stroke-width=".6"/>
<rect x="722" y="450" width="9" height="7" fill="none" stroke="#7fd6ff" stroke-width=".8"/><path d="M722 453.5 h9 M726.5 450 v7" stroke="#7fd6ff" stroke-width=".6"/>
<rect x="864" y="442" width="9" height="7" fill="none" stroke="#7fd6ff" stroke-width=".8"/><path d="M864 445.5 h9 M868.5 442 v7" stroke="#7fd6ff" stroke-width=".6"/>
<rect x="892" y="448" width="9" height="7" fill="none" stroke="#7fd6ff" stroke-width=".8"/><path d="M892 451.5 h9 M896.5 448 v7" stroke="#7fd6ff" stroke-width=".6"/>
<ellipse cx="809" cy="470" rx="84" ry="56" fill="url(#glw)" opacity=".45"/>
<path d="M752 468 C746 446 764 428 790 426 C806 418 836 420 850 432 C866 440 872 458 866 472 C862 486 848 494 836 494 C828 502 812 502 804 496 C790 500 776 498 770 488 C760 486 754 478 752 468 Z" fill="url(#brn)" fill-opacity=".88" stroke="#d2f0ff" stroke-width="1.100"/>
<g stroke="#d6f1ff" stroke-width=".5" opacity=".75"><path d="M854.6 448.5 L859.1 453.4"/><path d="M854.6 448.5 L842.2 450.6"/><path d="M854.6 448.5 L850.5 463.0"/><path d="M779.1 478.0 L780.3 476.3"/><path d="M779.1 478.0 L781.5 483.1"/><path d="M779.1 478.0 L789.1 479.9"/><path d="M786.7 437.3 L786.2 442.8"/><path d="M786.7 437.3 L787.3 446.6"/><path d="M786.7 437.3 L798.2 434.0"/><path d="M833.2 440.1 L822.9 444.5"/><path d="M833.2 440.1 L825.1 431.7"/><path d="M833.2 440.1 L821.7 447.1"/><path d="M787.2 489.2 L788.7 492.3"/><path d="M787.2 489.2 L783.3 491.0"/><path d="M787.2 489.2 L781.5 483.1"/><path d="M801.3 487.3 L803.3 485.0"/><path d="M801.3 487.3 L800.5 493.3"/><path d="M801.3 487.3 L807.1 489.0"/><path d="M796.1 446.3 L800.8 447.2"/><path d="M796.1 446.3 L787.3 446.6"/><path d="M796.1 446.3 L786.2 442.8"/><path d="M781.5 483.1 L779.1 478.0"/><path d="M781.5 483.1 L780.3 476.3"/><path d="M781.5 483.1 L783.3 491.0"/><path d="M767.7 451.7 L768.1 449.0"/><path d="M767.7 451.7 L763.6 456.4"/><path d="M767.7 451.7 L761.4 451.1"/><path d="M788.8 470.1 L792.9 467.9"/><path d="M788.8 470.1 L796.2 468.2"/><path d="M788.8 470.1 L789.1 479.9"/><path d="M812.5 445.1 L810.8 440.2"/><path d="M812.5 445.1 L821.7 447.1"/><path d="M812.5 445.1 L822.9 444.5"/><path d="M818.1 433.0 L825.1 431.7"/><path d="M818.1 433.0 L810.8 440.2"/><path d="M818.1 433.0 L822.9 444.5"/><path d="M827.9 460.9 L831.0 468.9"/><path d="M827.9 460.9 L835.1 455.0"/><path d="M827.9 460.9 L828.7 473.4"/><path d="M840.7 477.3 L835.1 480.9"/><path d="M840.7 477.3 L851.4 479.9"/><path d="M840.7 477.3 L836.9 487.6"/><path d="M787.3 446.6 L786.2 442.8"/><path d="M787.3 446.6 L785.1 450.4"/><path d="M787.3 446.6 L796.1 446.3"/><path d="M831.0 468.9 L828.7 473.4"/><path d="M831.0 468.9 L827.9 460.9"/><path d="M831.0 468.9 L835.1 480.9"/><path d="M821.7 447.1 L822.9 444.5"/><path d="M821.7 447.1 L812.5 445.1"/><path d="M821.7 447.1 L810.8 440.2"/><path d="M798.2 434.0 L786.7 437.3"/><path d="M798.2 434.0 L796.1 446.3"/><path d="M798.2 434.0 L800.8 447.2"/><path d="M798.6 460.6 L798.2 461.8"/><path d="M798.6 460.6 L799.5 464.7"/><path d="M798.6 460.6 L796.2 468.2"/><path d="M816.3 490.8 L819.3 492.1"/><path d="M816.3 490.8 L807.1 489.0"/><path d="M816.3 490.8 L826.3 491.4"/><path d="M756.2 454.1 L755.9 459.2"/><path d="M756.2 454.1 L761.4 451.1"/><path d="M756.2 454.1 L763.6 456.4"/><path d="M753.1 461.9 L755.9 459.2"/><path d="M753.1 461.9 L756.2 454.1"/><path d="M753.1 461.9 L763.2 458.9"/><path d="M836.9 487.6 L835.1 480.9"/><path d="M836.9 487.6 L840.7 477.3"/><path d="M836.9 487.6 L826.3 491.4"/><path d="M800.8 447.2 L796.1 446.3"/><path d="M800.8 447.2 L812.5 445.1"/><path d="M800.8 447.2 L810.8 440.2"/><path d="M764.2 478.6 L760.1 473.4"/><path d="M764.2 478.6 L779.1 478.0"/><path d="M764.2 478.6 L780.3 476.3"/><path d="M780.3 476.3 L779.1 478.0"/><path d="M780.3 476.3 L781.5 483.1"/><path d="M780.3 476.3 L789.1 479.9"/><path d="M826.3 491.4 L819.3 492.1"/><path d="M826.3 491.4 L816.3 490.8"/><path d="M826.3 491.4 L836.9 487.6"/><path d="M850.5 463.0 L843.4 462.6"/><path d="M850.5 463.0 L862.1 462.0"/><path d="M850.5 463.0 L859.1 453.4"/><path d="M786.2 442.8 L787.3 446.6"/><path d="M786.2 442.8 L786.7 437.3"/><path d="M786.2 442.8 L785.1 450.4"/><path d="M822.9 444.5 L821.7 447.1"/><path d="M822.9 444.5 L812.5 445.1"/><path d="M822.9 444.5 L833.2 440.1"/><path d="M783.3 491.0 L787.2 489.2"/><path d="M783.3 491.0 L788.7 492.3"/><path d="M783.3 491.0 L781.5 483.1"/><path d="M851.4 479.9 L840.7 477.3"/><path d="M851.4 479.9 L835.1 480.9"/><path d="M851.4 479.9 L836.9 487.6"/><path d="M825.1 431.7 L818.1 433.0"/><path d="M825.1 431.7 L833.2 440.1"/><path d="M825.1 431.7 L822.9 444.5"/><path d="M828.7 473.4 L831.0 468.9"/><path d="M828.7 473.4 L835.1 480.9"/><path d="M828.7 473.4 L827.9 460.9"/><path d="M796.2 468.2 L792.9 467.9"/><path d="M796.2 468.2 L799.5 464.7"/><path d="M796.2 468.2 L798.2 461.8"/><path d="M788.7 492.3 L787.2 489.2"/><path d="M788.7 492.3 L783.3 491.0"/><path d="M788.7 492.3 L781.5 483.1"/><path d="M835.1 455.0 L842.2 450.6"/><path d="M835.1 455.0 L827.9 460.9"/><path d="M835.1 455.0 L843.4 462.6"/><path d="M807.6 458.0 L798.6 460.6"/><path d="M807.6 458.0 L798.2 461.8"/><path d="M807.6 458.0 L799.5 464.7"/><path d="M798.2 461.8 L798.6 460.6"/><path d="M798.2 461.8 L799.5 464.7"/><path d="M798.2 461.8 L796.2 468.2"/><path d="M789.1 479.9 L781.5 483.1"/><path d="M789.1 479.9 L787.2 489.2"/><path d="M789.1 479.9 L780.3 476.3"/><path d="M800.5 493.3 L801.3 487.3"/><path d="M800.5 493.3 L807.1 489.0"/><path d="M800.5 493.3 L803.3 485.0"/><path d="M819.3 492.1 L816.3 490.8"/><path d="M819.3 492.1 L826.3 491.4"/><path d="M819.3 492.1 L807.1 489.0"/><path d="M799.5 464.7 L798.2 461.8"/><path d="M799.5 464.7 L798.6 460.6"/><path d="M799.5 464.7 L796.2 468.2"/><path d="M763.6 456.4 L763.2 458.9"/><path d="M763.6 456.4 L761.4 451.1"/><path d="M763.6 456.4 L767.7 451.7"/><path d="M842.2 450.6 L835.1 455.0"/><path d="M842.2 450.6 L843.4 462.6"/><path d="M842.2 450.6 L854.6 448.5"/><path d="M862.1 462.0 L859.1 453.4"/><path d="M862.1 462.0 L850.5 463.0"/><path d="M862.1 462.0 L854.6 448.5"/><path d="M763.2 458.9 L763.6 456.4"/><path d="M763.2 458.9 L755.9 459.2"/><path d="M763.2 458.9 L761.4 451.1"/><path d="M760.1 473.4 L764.2 478.6"/><path d="M760.1 473.4 L753.1 461.9"/><path d="M760.1 473.4 L763.2 458.9"/><path d="M768.1 449.0 L767.7 451.7"/><path d="M768.1 449.0 L761.4 451.1"/><path d="M768.1 449.0 L763.6 456.4"/><path d="M810.8 440.2 L812.5 445.1"/><path d="M810.8 440.2 L818.1 433.0"/><path d="M810.8 440.2 L800.8 447.2"/><path d="M761.4 451.1 L763.6 456.4"/><path d="M761.4 451.1 L756.2 454.1"/><path d="M761.4 451.1 L767.7 451.7"/><path d="M788.0 457.0 L785.1 450.4"/><path d="M788.0 457.0 L787.3 446.6"/><path d="M788.0 457.0 L798.6 460.6"/><path d="M755.9 459.2 L753.1 461.9"/><path d="M755.9 459.2 L756.2 454.1"/><path d="M755.9 459.2 L763.2 458.9"/><path d="M807.1 489.0 L803.3 485.0"/><path d="M807.1 489.0 L801.3 487.3"/><path d="M807.1 489.0 L800.5 493.3"/><path d="M859.1 453.4 L854.6 448.5"/><path d="M859.1 453.4 L862.1 462.0"/><path d="M859.1 453.4 L850.5 463.0"/><path d="M785.1 450.4 L787.3 446.6"/><path d="M785.1 450.4 L788.0 457.0"/><path d="M785.1 450.4 L786.2 442.8"/><path d="M835.1 480.9 L840.7 477.3"/><path d="M835.1 480.9 L836.9 487.6"/><path d="M835.1 480.9 L828.7 473.4"/><path d="M803.3 485.0 L801.3 487.3"/><path d="M803.3 485.0 L807.1 489.0"/><path d="M803.3 485.0 L800.5 493.3"/><path d="M792.9 467.9 L796.2 468.2"/><path d="M792.9 467.9 L788.8 470.1"/><path d="M792.9 467.9 L799.5 464.7"/><path d="M843.4 462.6 L850.5 463.0"/><path d="M843.4 462.6 L835.1 455.0"/><path d="M843.4 462.6 L842.2 450.6"/></g>
<g fill="#fff"><circle cx="854.6" cy="448.5" r="1.4"/><circle cx="779.1" cy="478.0" r="0.7"/><circle cx="786.7" cy="437.3" r="1.4"/><circle cx="833.2" cy="440.1" r="1.0"/><circle cx="787.2" cy="489.2" r="1.4"/><circle cx="801.3" cy="487.3" r="1.4"/><circle cx="796.1" cy="446.3" r="0.7"/><circle cx="781.5" cy="483.1" r="1.0"/><circle cx="767.7" cy="451.7" r="0.7"/><circle cx="788.8" cy="470.1" r="1.4"/><circle cx="812.5" cy="445.1" r="0.7"/><circle cx="818.1" cy="433.0" r="0.7"/><circle cx="827.9" cy="460.9" r="1.4"/><circle cx="840.7" cy="477.3" r="1.0"/><circle cx="787.3" cy="446.6" r="1.0"/><circle cx="831.0" cy="468.9" r="1.0"/><circle cx="821.7" cy="447.1" r="1.0"/><circle cx="798.2" cy="434.0" r="0.7"/><circle cx="798.6" cy="460.6" r="1.0"/><circle cx="816.3" cy="490.8" r="1.0"/><circle cx="756.2" cy="454.1" r="0.7"/><circle cx="753.1" cy="461.9" r="1.0"/><circle cx="836.9" cy="487.6" r="1.0"/><circle cx="800.8" cy="447.2" r="1.0"/><circle cx="764.2" cy="478.6" r="1.4"/><circle cx="780.3" cy="476.3" r="1.0"/><circle cx="826.3" cy="491.4" r="0.7"/><circle cx="850.5" cy="463.0" r="0.7"/><circle cx="786.2" cy="442.8" r="1.0"/><circle cx="822.9" cy="444.5" r="1.4"/><circle cx="783.3" cy="491.0" r="0.7"/><circle cx="851.4" cy="479.9" r="1.0"/><circle cx="825.1" cy="431.7" r="0.7"/><circle cx="828.7" cy="473.4" r="1.4"/><circle cx="796.2" cy="468.2" r="0.7"/><circle cx="788.7" cy="492.3" r="0.7"/><circle cx="835.1" cy="455.0" r="0.7"/><circle cx="807.6" cy="458.0" r="0.7"/><circle cx="798.2" cy="461.8" r="0.7"/><circle cx="789.1" cy="479.9" r="0.7"/><circle cx="800.5" cy="493.3" r="1.4"/><circle cx="819.3" cy="492.1" r="1.0"/><circle cx="799.5" cy="464.7" r="1.0"/><circle cx="763.6" cy="456.4" r="1.4"/><circle cx="842.2" cy="450.6" r="1.0"/><circle cx="862.1" cy="462.0" r="0.7"/><circle cx="763.2" cy="458.9" r="1.4"/><circle cx="760.1" cy="473.4" r="1.0"/><circle cx="768.1" cy="449.0" r="0.7"/><circle cx="810.8" cy="440.2" r="1.0"/><circle cx="761.4" cy="451.1" r="1.4"/><circle cx="788.0" cy="457.0" r="1.4"/><circle cx="755.9" cy="459.2" r="0.7"/><circle cx="807.1" cy="489.0" r="1.4"/><circle cx="859.1" cy="453.4" r="1.4"/><circle cx="785.1" cy="450.4" r="1.0"/><circle cx="835.1" cy="480.9" r="1.4"/><circle cx="803.3" cy="485.0" r="0.7"/><circle cx="792.9" cy="467.9" r="1.4"/><circle cx="843.4" cy="462.6" r="1.4"/></g>
<path d="M790 430 C800 444 796 462 782 474 M826 424 C836 440 832 462 816 470 C806 480 808 492 812 498 M850 434 C846 450 852 464 864 470" fill="none" stroke="#2a78ad" stroke-width="1.400" opacity=".7"/>
<path d="M812 494 C818 484 846 484 852 496 C850 508 830 512 818 506 Z" fill="#5fb3e2" stroke="#d9f3ff" stroke-width=".7"/>
<path d="M812 498 L822 496 L834 530 L826 532 Z" fill="#4f9fd0" stroke="#c9ecff" stroke-width=".6"/>
<ellipse cx="809" cy="553" rx="86" ry="14" fill="url(#glw)" opacity=".7"/>
<ellipse cx="809" cy="553" rx="77" ry="11.500" fill="none" stroke="#9fe4ff" stroke-width="1.200"/><ellipse cx="809" cy="553" rx="60" ry="8.500" fill="none" stroke="#6fcbf5" stroke-width=".8"/><ellipse cx="809" cy="553" rx="38" ry="5.500" fill="#5cc4f2" opacity=".45"/><ellipse cx="809" cy="553" rx="104" ry="17" fill="none" stroke="#3f9ccc" stroke-width=".7" opacity=".8"/>
<path d="M806 530 L812 530 L816 553 L802 553 Z" fill="#bfeaff" opacity=".35"/>
<rect x="692.500" y="483" width="55.500" height="44" fill="#0d2a40"/><rect x="694" y="484.500" width="52.500" height="41" fill="#e9f4fb"/>
<circle cx="703" cy="498" r="5" fill="#3d8ed0"/><circle cx="720" cy="498" r="5" fill="#5aa9e0"/><rect x="730" y="492" width="14" height="2" fill="#9cc3de"/><rect x="730" y="497" width="14" height="2" fill="#9cc3de"/><rect x="730" y="502" width="10" height="2" fill="#9cc3de"/><rect x="698" y="509" width="44" height="12" fill="#c7e0f1"/>
<rect x="879" y="479" width="56" height="54" rx="2" fill="#0b2236"/><rect x="881" y="481" width="52" height="50" fill="#f1f7fb"/>
<rect x="886" y="502" width="3" height="10" fill="#3c97a6"/>
<rect x="890" y="496" width="3" height="16" fill="#3c97a6"/>
<rect x="895" y="500" width="3" height="12" fill="#3c97a6"/>
<rect x="899" y="492" width="3" height="20" fill="#3c97a6"/>
<rect x="904" y="498" width="3" height="14" fill="#3c97a6"/>
<path d="M910 510 L916 498 L920 504 L928 490" fill="none" stroke="#4a90c8" stroke-width=".9"/><rect x="885" y="516" width="44" height="2" fill="#b7cfde"/><rect x="885" y="521" width="30" height="2" fill="#b7cfde"/><rect x="885" y="485" width="20" height="2" fill="#7da7c2"/>
<ellipse cx="692.0" cy="507.5" rx="4.0" ry="4.7" fill="#d9a98c"/><path d="M688.0 506.6 a4.0 4.5 0 0 1 8.1 0 Z" fill="#2a2220"/><path d="M688.2 515.1 q3.8 -2.500 7.5 0 l.6 19.4 h-8.7 Z" fill="#27384d"/><rect x="688.6" y="532.6" width="3.0" height="27.0" fill="#1a2535"/><rect x="692.4" y="532.6" width="3.0" height="27.0" fill="#1a2535"/>
<ellipse cx="712.0" cy="505.6" rx="4.2" ry="4.8" fill="#d9a98c"/><path d="M707.8 504.8 a4.2 4.6 0 0 1 8.4 0 Z" fill="#2a2220"/><path d="M707.8 513.5 q4.2 -2.500 8.5 0 l.6 20.2 h-9.7 Z" fill="#8cb9dd"/><rect x="708.1" y="531.7" width="3.5" height="28.0" fill="#2a3547"/><rect x="712.4" y="531.7" width="3.5" height="28.0" fill="#2a3547"/>
<ellipse cx="729.0" cy="507.5" rx="4.0" ry="4.7" fill="#d9a98c"/><path d="M725.0 506.6 a4.0 4.5 0 0 1 8.1 0 Z" fill="#111"/><path d="M725.0 515.1 q4.0 -2.500 8.0 0 l.6 19.4 h-9.2 Z" fill="#1f3a3a"/><rect x="725.4" y="532.6" width="3.2" height="27.0" fill="#141d26"/><rect x="729.4" y="532.6" width="3.2" height="27.0" fill="#141d26"/>
<ellipse cx="757.0" cy="507.5" rx="4.1" ry="4.7" fill="#d9a98c"/><path d="M752.9 506.7 a4.1 4.5 0 0 1 8.2 0 Z" fill="#2a2220"/><path d="M753.2 515.3 q3.8 -2.500 7.5 0 l.6 19.8 h-8.7 Z" fill="#3f78b0"/><rect x="753.6" y="533.1" width="3.0" height="27.5" fill="#16202e"/><rect x="757.4" y="533.1" width="3.0" height="27.5" fill="#16202e"/>
<ellipse cx="770.0" cy="504.9" rx="4.4" ry="5.1" fill="#d9a98c"/><path d="M765.6 504.0 a4.4 4.9 0 0 1 8.8 0 Z" fill="#141414"/><path d="M765.8 513.1 q4.2 -2.500 8.5 0 l.6 21.2 h-9.7 Z" fill="#17465c"/><rect x="766.1" y="532.3" width="3.5" height="29.5" fill="#10161f"/><rect x="770.4" y="532.3" width="3.5" height="29.5" fill="#10161f"/>
<path d="M776 514 L786 508 L789 512 L780 519 Z" fill="#f2f2ee"/>
<ellipse cx="864.0" cy="505.6" rx="4.2" ry="4.8" fill="#d9a98c"/><path d="M859.8 504.8 a4.2 4.6 0 0 1 8.4 0 Z" fill="#8a4b2a"/><path d="M860.0 513.5 q4.0 -2.500 8.0 0 l.6 20.2 h-9.2 Z" fill="#9fc5e3"/><rect x="860.4" y="531.7" width="3.2" height="28.0" fill="#2a3a4f"/><rect x="864.4" y="531.7" width="3.2" height="28.0" fill="#2a3a4f"/>
<ellipse cx="878.0" cy="509.4" rx="4.0" ry="4.6" fill="#d9a98c"/><path d="M874.0 508.6 a4.0 4.4 0 0 1 7.9 0 Z" fill="#141414"/><path d="M874.5 516.9 q3.5 -2.500 7.0 0 l.6 19.1 h-8.2 Z" fill="#2c9bb0"/><rect x="874.9" y="534.0" width="2.7" height="26.5" fill="#16202e"/><rect x="878.4" y="534.0" width="2.7" height="26.5" fill="#16202e"/>
<ellipse cx="898.0" cy="507.5" rx="4.1" ry="4.7" fill="#d9a98c"/><path d="M893.9 506.7 a4.1 4.5 0 0 1 8.2 0 Z" fill="#1a1412"/><path d="M894.2 515.3 q3.8 -2.500 7.5 0 l.6 19.8 h-8.7 Z" fill="#1d4468"/><rect x="894.6" y="533.1" width="3.0" height="27.5" fill="#131c29"/><rect x="898.4" y="533.1" width="3.0" height="27.5" fill="#131c29"/>
<ellipse cx="912.0" cy="507.5" rx="4.0" ry="4.7" fill="#d9a98c"/><path d="M908.0 506.6 a4.0 4.5 0 0 1 8.1 0 Z" fill="#3a1f16"/><path d="M908.5 515.1 q3.5 -2.500 7.0 0 l.6 19.4 h-8.2 Z" fill="#e89a2f"/><rect x="908.9" y="532.6" width="2.7" height="27.0" fill="#1a1a24"/><rect x="912.4" y="532.6" width="2.7" height="27.0" fill="#1a1a24"/>
</g>
<g clip-path="url(#imgc)" fill="none" stroke="#f2c76a" stroke-width="1" opacity=".8" filter="url(#sb)"><path d="M604 452 C650 440 700 452 760 478"/><path d="M612 470 C660 462 720 480 772 470"/><path d="M620 430 C670 436 720 462 764 492"/><path d="M640 560 C690 548 730 520 770 488"/><path d="M652 574 C700 556 740 530 776 500"/></g><g fill="none" stroke="#ecc980" stroke-width=".8" opacity=".35"><path d="M604 452 C650 440 700 452 760 478"/><path d="M612 470 C660 462 720 480 772 470"/><path d="M620 430 C670 436 720 462 764 492"/><path d="M640 560 C690 548 730 520 770 488"/><path d="M652 574 C700 556 740 530 776 500"/></g><g fill="none" stroke="#f2c76a" stroke-width="1.100" opacity=".85" filter="url(#sb)"><path d="M860 470 C880 440 910 410 966 384"/><path d="M866 456 C890 430 930 404 966 398"/><path d="M852 440 C880 420 920 396 960 372"/><path d="M880 462 C905 450 935 440 966 438"/></g><g fill="none" stroke="#fff1c9" stroke-width=".5" opacity=".9"><path d="M860 470 C880 440 910 410 966 384"/><path d="M852 440 C880 420 920 396 960 372"/></g>
<circle cx="686" cy="512" r="6" fill="url(#gold)"/><circle cx="694" cy="566" r="5" fill="url(#gold)"/><circle cx="890" cy="424" r="6" fill="url(#glw)"/><circle cx="890" cy="424" r="2" fill="#c9f1ff"/>
</svg>
<div class="t" style="left:391.300px;top:308.800px;font-family:'Liberation Serif',serif;font-weight:bold;font-size:25.500px;color:#17497a;-webkit-text-stroke:.5px #17497a;--w:401px;transform:scaleX(1.0129)">De la herramientas a la Metodología</div>
<div class="c" style="left:391px;top:344.600px;width:546px;height:1.200px;background:#eadfc4"></div>
<div class="t" style="left:391.300px;top:353.600px;font-family:'Liberation Serif',serif;font-weight:bold;font-size:16.600px;color:#1d4d7b;-webkit-text-stroke:.3px #1d4d7b;--w:152px;transform:scaleX(0.9314)">Una Palanca Cognitiva</div>
<div class="t" style="left:391.300px;top:396.6px;font-size:12.400px;color:#1b1b1b;--w:233.0px;transform:scaleX(0.9749)">El objetivo de este taller no es simplemente</div>
<div class="t" style="left:391.300px;top:415.2px;font-size:12.400px;color:#1b1b1b;--w:187.6px;transform:scaleX(0.9867)">aumentar la productividad docente</div>
<div class="t" style="left:391.300px;top:433.8px;font-size:12.400px;color:#1b1b1b;--w:79.7px;transform:scaleX(0.9976)">administrativa.</div>
<div class="c" style="left:386px;top:456.300px;width:292px;height:99.400px;background:#d6e2ef"></div>
<div class="t" style="left:391.300px;top:461.8px;font-size:13.800px;font-weight:bold;color:#1b3f68;--w:237.3px;transform:scaleX(1.0147)">El verdadero cambio de paradigma:</div>
<div class="t" style="left:391.300px;top:480.6px;font-size:13.800px;font-weight:bold;color:#1b3f68;--w:228.7px;transform:scaleX(1.0251)">No buscamos que los estudiantes</div>
<div class="t" style="left:391.300px;top:499.4px;font-size:13.800px;font-weight:bold;color:#1b3f68;--w:267.7px;transform:scaleX(1.0238)">trabajen menos, sino que, a través de la</div>
<div class="t" style="left:391.300px;top:518.2px;font-size:13.800px;font-weight:bold;color:#1b3f68;--w:266.1px;transform:scaleX(1.0208)">incorporación de nuevas metodologías,</div>
<div class="t" style="left:391.300px;top:537.0px;font-size:13.800px;font-weight:bold;color:#1b3f68;--w:218.0px;transform:scaleX(1.0302)">trabajen de una manera distinta.</div>
<svg class="c" style="left:529px;top:563px" width="12" height="12" viewBox="0 0 12 12"><path d="M6 .4 L8 2.800 H6.800 V5.200 H9.200 V4 L11.600 6 L9.200 8 V6.800 H6.800 V9.200 H8 L6 11.600 L4 9.200 H5.200 V6.800 H2.800 V8 L.4 6 L2.800 4 V5.200 H5.200 V2.800 H4 Z" fill="#d8c51e" stroke="#222" stroke-width=".7"/></svg>
</div>

<!-- ZTOOL -->
<div id="ztool" class="abs"></div>
<svg class="abs" style="left:38px;top:669px" width="28" height="28" viewBox="0 0 28 28" fill="none"><rect x="10.500" y="3" width="7" height="13" rx="3.500" stroke="#e8e8e8" stroke-width="1.300"/><path d="M7.300 12.500 a6.700 6.700 0 0 0 13.400 0" stroke="#e8e8e8" stroke-width="1.300"/><path d="M14 19.500 V24.500 M10 25 H18" stroke="#e8e8e8" stroke-width="1.300"/><path d="M2.500 25.500 L25.500 2" stroke="#f0245f" stroke-width="1.900"/></svg>
<svg class="abs" style="left:79.5px;top:680.500px" width="9" height="6" viewBox="0 0 9 6"><path d="M1 5 L4.500 1.400 L8 5" fill="none" stroke="#fff" stroke-width="1.400"/></svg>
<div class="zl" style="left:36px;--w:31.700px;transform:scaleX(0.9534)">Audio</div>
<svg class="abs" style="left:132px;top:674px" width="27" height="18" viewBox="0 0 27 18" fill="none" stroke="#f2f2f2" stroke-width="1.400"><rect x="1.200" y="2.200" width="15.600" height="13.600" rx="3.600"/><path d="M19 7 L24.600 3.400 V14.600 L19 11 Z" stroke-linejoin="round"/></svg>
<svg class="abs" style="left:177.3px;top:680.500px" width="9" height="6" viewBox="0 0 9 6"><path d="M1 5 L4.500 1.400 L8 5" fill="none" stroke="#fff" stroke-width="1.400"/></svg>
<div class="zl" style="left:129.500px;--w:30.500px;transform:scaleX(0.8975)">Vídeo</div>
<svg class="abs" style="left:549px;top:674px" width="21" height="20" viewBox="0 0 21 20" fill="none" stroke="#f2f2f2" stroke-width="1.400"><circle cx="6.500" cy="4.400" r="2.700"/><path d="M1.200 17.800 V14 a4 4 0 0 1 4 -4 H8.400 M1.200 17.800 H8"/><circle cx="14" cy="8" r="2.500"/><path d="M9.400 17.800 V16.400 a3.400 3.400 0 0 1 3.400 -3.400 H15.400 a3.400 3.400 0 0 1 3.400 3.400 V17.800 Z"/></svg>
<div class="t" style="left:575.600px;top:675.500px;font-size:11px;color:#d8d8d8;--w:10px;transform:scaleX(0.8163)">71</div>
<svg class="abs" style="left:607.0px;top:680.500px" width="9" height="6" viewBox="0 0 9 6"><path d="M1 5 L4.500 1.400 L8 5" fill="none" stroke="#fff" stroke-width="1.400"/></svg>
<div class="zl" style="left:525.300px;--w:68px;transform:scaleX(0.9048)">Participantes</div>
<svg class="abs" style="left:657px;top:673px" width="24" height="22" viewBox="0 0 24 22" fill="none" stroke="#f2f2f2" stroke-width="1.400" stroke-linejoin="round"><path d="M4.600 1.600 H19.400 a3 3 0 0 1 3 3 V12 a3 3 0 0 1 -3 3 H10.500 L5 20 V15 H4.600 a3 3 0 0 1 -3 -3 V4.600 a3 3 0 0 1 3 -3 Z"/></svg>
<svg class="abs" style="left:697.0px;top:680.500px" width="9" height="6" viewBox="0 0 9 6"><path d="M1 5 L4.500 1.400 L8 5" fill="none" stroke="#fff" stroke-width="1.400"/></svg>
<div class="zl" style="left:657px;--w:24px;transform:scaleX(0.8737)">Chat</div>
<svg class="abs" style="left:742px;top:673px" width="25" height="22" viewBox="0 0 25 22" fill="none" stroke="#f2f2f2" stroke-width="1.400" stroke-linejoin="round"><path d="M12.500 20 C7 16 1.400 12 1.400 7 C1.400 3.600 4 1.600 6.800 1.600 C9.200 1.600 11.400 3 12.500 5 C13.600 3 15.800 1.600 18.200 1.600 C21 1.600 23.600 3.600 23.600 7 C23.600 12 18 16 12.500 20 Z"/></svg>
<svg class="abs" style="left:777.5px;top:680.500px" width="9" height="6" viewBox="0 0 9 6"><path d="M1 5 L4.500 1.400 L8 5" fill="none" stroke="#fff" stroke-width="1.400"/></svg>
<div class="zl" style="left:725.400px;--w:57.300px;transform:scaleX(0.8713)">Reaccionar</div>
<svg class="abs" style="left:830px;top:674px" width="26" height="19" viewBox="0 0 26 19" fill="none" stroke="#f2f2f2" stroke-width="1.400"><rect x="1.200" y="1.200" width="23.600" height="16.600" rx="2.600"/><path d="M13 14 V5.400 M9.200 8.800 L13 5 L16.800 8.800"/></svg>
<svg class="abs" style="left:875.2px;top:680.500px" width="9" height="6" viewBox="0 0 9 6"><path d="M1 5 L4.500 1.400 L8 5" fill="none" stroke="#fff" stroke-width="1.400"/></svg>
<div class="zl" style="left:815.800px;--w:53px;transform:scaleX(0.9286)">Compartir</div>
<svg class="abs" style="left:921px;top:669.500px" width="26" height="26" viewBox="0 0 26 26"><circle cx="13" cy="13" r="11.600" fill="none" stroke="#f2f2f2" stroke-width="1.400"/><circle cx="8" cy="13" r="1.400" fill="#fff"/><circle cx="13" cy="13" r="1.400" fill="#fff"/><circle cx="18" cy="13" r="1.400" fill="#fff"/></svg>
<div class="zl" style="left:923.300px;--w:21.700px;transform:scaleX(0.8835)">Más</div>
<svg class="abs" style="left:1305px;top:671.500px" width="26" height="22" viewBox="0 0 26 22"><path d="M7.200 1.200 H18.800 L24.600 11 L18.800 20.800 H7.200 L1.400 11 Z" fill="none" stroke="#f0245f" stroke-width="1.500" stroke-linejoin="round"/><path d="M9.400 7.400 L16.600 14.600 M16.600 7.400 L9.400 14.600" stroke="#fff" stroke-width="2.400" stroke-linecap="round"/></svg>
<div class="zl" style="left:1297px;--w:43px;transform:scaleX(0.8753)">Finalizar</div>
<div class="abs" style="left:14.500px;top:597.500px;width:49px;height:49px;border-radius:50%;background:#1b1d1f;border:1.500px solid #e0e0e0"></div>
<svg class="abs" style="left:26px;top:609px" width="26" height="26" viewBox="0 0 26 26" fill="none" stroke="#23d96c" stroke-width="1.600" stroke-linejoin="round"><path d="M4 17.500 L16.500 5 a2.300 2.300 0 0 1 3.300 0 L21 6.200 a2.300 2.300 0 0 1 0 3.300 L8.500 22 H4 Z"/><path d="M14.500 7 L19 11.500"/><path d="M3 24.500 H23" stroke-width="1.500"/></svg>

<!-- TASKBAR -->
<div id="task" class="abs"></div>
<svg class="abs" style="left:407.0px;top:731.5px" width="24" height="24" viewBox="0 0 24 24"><defs><linearGradient id="wl" x1="0" y1="0" x2="1" y2="1"><stop offset="0" stop-color="#3fb4f5"/><stop offset="1" stop-color="#0a6fd6"/></linearGradient></defs><rect x="0" y="0" width="11.400" height="11.400" fill="url(#wl)"/><rect x="12.600" y="0" width="11.400" height="11.400" fill="url(#wl)"/><rect x="0" y="12.600" width="11.400" height="11.400" fill="url(#wl)"/><rect x="12.600" y="12.600" width="11.400" height="11.400" fill="url(#wl)"/></svg>
<svg class="abs" style="left:451.5px;top:731.5px" width="24" height="24" viewBox="0 0 24 24"><circle cx="10.400" cy="10.400" r="7.800" fill="none" stroke="#1a1a1a" stroke-width="2.300"/><path d="M16.200 16.200 L22 22" stroke="#1a1a1a" stroke-width="2.800" stroke-linecap="round"/></svg>
<svg class="abs" style="left:494.0px;top:730.5px" width="26" height="26" viewBox="0 0 26 26"><circle cx="12" cy="14" r="11.500" fill="#fbbc05"/><path d="M12 14 L2.040 8.250 A11.500 11.500 0 0 1 21.960 8.250 Z" fill="#ea4335"/><path d="M12 14 L2.040 8.250 A11.500 11.500 0 0 0 6.250 23.960 Z" fill="#34a853"/><path d="M12 14 L6.250 23.960 A11.500 11.500 0 0 1 2.040 8.250" fill="#34a853"/><path d="M12 14 L6.250 23.960 A11.500 11.500 0 0 0 21.960 8.250 Z" fill="#fbbc05"/><path d="M2.040 8.250 A11.500 11.500 0 0 1 21.960 8.250 H12 Z" fill="#ea4335"/><circle cx="12" cy="14" r="5.600" fill="#fff"/><circle cx="12" cy="14" r="4.400" fill="#4285f4"/><circle cx="19.500" cy="6.500" r="6" fill="#e8f0fe" stroke="#2f6fde" stroke-width="1.200"/><circle cx="19.500" cy="5" r="1.900" fill="none" stroke="#2f6fde" stroke-width="1.100"/><path d="M15.800 9.800 a3.800 3 0 0 1 7.400 0" fill="none" stroke="#2f6fde" stroke-width="1.100"/></svg>
<svg class="abs" style="left:541.0px;top:730.5px" width="22" height="26" viewBox="0 0 22 26"><defs><linearGradient id="bv" x1="0" y1="0" x2="1" y2="0"><stop offset="0" stop-color="#ff5500"/><stop offset="1" stop-color="#ff2000"/></linearGradient></defs><path d="M11 .8 L15 .8 L17 3 L19.600 2.800 L21.200 6 L20.400 8 L21 10 L18.400 19.600 C18 21 17 22 16 22.800 L11 25.400 L6 22.800 C5 22 4 21 3.600 19.600 L1 10 L1.600 8 L.8 6 L2.400 2.800 L5 3 L7 .8 Z" fill="url(#bv)"/><path d="M11 5.600 L14.200 5 L17 7.600 L16.400 10 L17.400 11.600 L14.600 14.600 L15 16.400 L11 19.800 L7 16.400 L7.400 14.600 L4.600 11.600 L5.600 10 L5 7.600 L7.800 5 Z" fill="#fff"/><path d="M11 9.600 L13 10.600 L12.400 13.400 L11 14.200 L9.600 13.400 L9 10.600 Z" fill="#ff3a00"/></svg>
<svg class="abs" style="left:583.1px;top:731.0px" width="25" height="25" viewBox="0 0 25 25"><defs><radialGradient id="ff" cx=".7" cy=".2" r=".9"><stop offset="0" stop-color="#ffe226"/><stop offset=".4" stop-color="#ff9a1f"/><stop offset=".8" stop-color="#ff3750"/><stop offset="1" stop-color="#e31587"/></radialGradient><radialGradient id="ff2" cx=".5" cy=".4" r=".6"><stop offset="0" stop-color="#a060f5"/><stop offset="1" stop-color="#5b2fd0"/></radialGradient></defs><path d="M12.500 2 C15 .6 19 2 20 4 C23 6.500 24.400 10 24 14 C23.400 20 18.400 24.400 12.500 24.400 C6 24.400 1 19.400 1 13 C1 10 2 7.600 3.600 6 C3.600 7 4 8 4.600 8.400 C5.600 5.600 8.400 3 12.500 2 Z" fill="url(#ff)"/><circle cx="12.800" cy="13.600" r="6.200" fill="url(#ff2)"/><path d="M6.600 10.600 C9 9 12 9.600 13.600 11.400 C11.600 11.200 10.400 12.400 10.600 14 C11 16.400 14.600 17 16.400 15 C16.400 19 12 21 8.800 19 C6 17.200 5.400 13.400 6.600 10.600 Z" fill="#ff8a1f"/></svg>
<svg class="abs" style="left:627.5px;top:732.0px" width="25" height="23" viewBox="0 0 25 23"><rect x="7" y=".8" width="17.200" height="21.400" rx="1.600" fill="#21a366"/><rect x="15.600" y=".8" width="8.600" height="5.400" fill="#33c481"/><rect x="7" y="6.200" width="8.600" height="5.400" fill="#107c41"/><rect x="15.600" y="6.200" width="8.600" height="5.400" fill="#21a366"/><rect x="7" y="11.600" width="8.600" height="5.400" fill="#185c37"/><rect x="15.600" y="11.600" width="8.600" height="5.400" fill="#107c41"/><rect x="7" y="17" width="17.200" height="5.200" fill="#185c37"/><rect x=".6" y="5" width="13" height="13" rx="1.400" fill="#107c41"/><path d="M4.200 8 L10 15 M10 8 L4.200 15" stroke="#fff" stroke-width="1.700"/></svg>
<svg class="abs" style="left:671.0px;top:731.5px" width="25" height="24" viewBox="0 0 25 24"><circle cx="14" cy="12" r="10.800" fill="#ed6c47"/><path d="M14 1.200 A10.800 10.800 0 0 1 24.800 12 H14 Z" fill="#ff8f6b"/><path d="M14 12 H24.800 A10.800 10.800 0 0 1 14 22.800 Z" fill="#d35230"/><rect x=".6" y="5.500" width="13" height="13" rx="1.400" fill="#c43e1c"/><path d="M5 15.400 V8.400 H7.800 a2.200 2.200 0 0 1 0 4.400 H5" fill="none" stroke="#fff" stroke-width="1.600"/></svg>
<svg class="abs" style="left:715.3px;top:732.0px" width="25" height="23" viewBox="0 0 25 23"><rect x="7" y=".8" width="17.200" height="21.400" rx="1.600" fill="#41a5ee"/><rect x="7" y="6.200" width="17.200" height="5.400" fill="#2b7cd3"/><rect x="7" y="11.600" width="17.200" height="5.400" fill="#185abd"/><rect x="7" y="17" width="17.200" height="5.200" fill="#103f91"/><rect x=".6" y="5" width="13" height="13" rx="1.400" fill="#185abd"/><path d="M3.400 8 L5.200 15 L7.100 9.400 L9 15 L10.800 8" fill="none" stroke="#fff" stroke-width="1.400" stroke-linejoin="round"/></svg>
<svg class="abs" style="left:758.8px;top:732.5px" width="26" height="22" viewBox="0 0 26 22"><path d="M1 3 a1.600 1.600 0 0 1 1.600 -1.600 H9 L11.400 4 H23.400 a1.600 1.600 0 0 1 1.600 1.600 V8 H1 Z" fill="#f0a90c"/><rect x="1" y="5.600" width="24" height="15.400" rx="1.600" fill="#ffd04a"/><rect x="1" y="15" width="24" height="6" rx="1.600" fill="#f5b82a"/><rect x="7.400" y="14.400" width="11.200" height="6.600" rx="1" fill="#1d7fe0"/><rect x="9.400" y="17.400" width="7.200" height="1.800" fill="#0c59b5"/></svg>
<svg class="abs" style="left:803.3px;top:731.0px" width="25" height="25" viewBox="0 0 25 25"><defs><linearGradient id="ph" x1="0" y1="0" x2="1" y2="1"><stop offset="0" stop-color="#34b1f7"/><stop offset="1" stop-color="#0c5fd0"/></linearGradient></defs><circle cx="12.500" cy="12.500" r="11.700" fill="url(#ph)"/><circle cx="12.500" cy="11.200" r="8.400" fill="#e9f6ff"/><path d="M3 16 a11.700 11.700 0 0 0 19 0 a10 9 0 0 1 -19 0 Z" fill="#0a4fb8"/><path d="M9 6.600 L10.800 6.200 L12 9 L10.800 10.200 C11.400 11.600 12.600 12.800 14 13.400 L15.200 12.200 L18 13.400 L17.600 15.400 C17.400 16.200 16.600 16.400 15.800 16.200 C11.800 15.200 8.800 12.200 8 8.400 C7.800 7.600 8.200 6.800 9 6.600 Z" fill="#1273e6"/></svg>
<svg class="abs" style="overflow:visible;left:846.4px;top:730.5px" width="26" height="26" viewBox="0 0 26 26"><circle cx="18.600" cy="9.400" r="3" fill="#5059c9"/><path d="M16 13.200 H23.400 a1.400 1.400 0 0 1 1.400 1.400 V19.400 a4 4 0 0 1 -4 4 H19 Z" fill="#5059c9"/><circle cx="11.600" cy="7.800" r="4" fill="#7b83eb"/><path d="M5.600 13.200 H17 a1.400 1.400 0 0 1 1.400 1.400 V21 a5.400 5.400 0 0 1 -5.400 5 H11 a5.400 5.400 0 0 1 -5.400 -5 Z" fill="#7b83eb"/><rect x="1" y="11" width="11.600" height="11.600" rx="1.400" fill="#4b53bc"/><path d="M4 14.200 H9.600 M6.800 14.200 V20" stroke="#fff" stroke-width="1.500"/><circle cx="22.100" cy="4.600" r="6.200" fill="#c50f2f" style="overflow:visible"/></svg>
<svg class="abs" style="left:891.2px;top:731.0px" width="25" height="25" viewBox="0 0 25 25"><defs><linearGradient id="eg" x1="0" y1="0" x2="1" y2="1"><stop offset="0" stop-color="#35c1b1"/><stop offset=".5" stop-color="#1f8fd6"/><stop offset="1" stop-color="#0c4fa8"/></linearGradient><linearGradient id="eg2" x1="0" y1="0" x2="1" y2="0"><stop offset="0" stop-color="#2fbf6a"/><stop offset="1" stop-color="#4fd8d0"/></linearGradient></defs><circle cx="12.500" cy="12.500" r="11.700" fill="url(#eg)"/><path d="M1 11 C2 5 7 1 12.500 .8 C19 .8 24 5.600 24.200 11 C24.200 14 22 16 19 16 C16 16 15 14.600 15.600 13 C16 12 15.600 9.600 12.400 9.400 C7.600 9.200 4.800 12.600 5.200 17 C3 15.600 .6 14 1 11 Z" fill="url(#eg2)" opacity=".95"/><path d="M9.400 12.800 C8.600 17 11 21.400 16 22 C18.400 22.200 20.600 21.400 22 20 C20 23 16.600 24.600 12.500 24.200 C7 23.600 4.400 19 5.200 15.400 C5.800 13 7.600 12.200 9.400 12.800 Z" fill="#0c59a4"/><path d="M12.200 9.400 C9.400 9.400 8 11.600 8.600 14 C9 16 11 17.600 13.400 17 C11.800 15.800 12.600 12.800 15.400 13 C15.800 11 14.600 9.400 12.200 9.400 Z" fill="#eef6fb"/></svg>
<div class="abs" style="left:929.700px;top:724.500px;width:35.500px;height:40px;border-radius:4px;background:#f9fbfb;box-shadow:0 0 0 .6px #dfe4e4"></div>
<svg class="abs" style="left:934.8px;top:730.0px" width="25" height="25" viewBox="0 0 25 25"><defs><linearGradient id="zm" x1="0" y1="0" x2="0" y2="1"><stop offset="0" stop-color="#2a7cff"/><stop offset="1" stop-color="#0b55e0"/></linearGradient></defs><circle cx="12.500" cy="12.500" r="12" fill="url(#zm)"/><text x="12.500" y="16" font-family="Liberation Sans, sans-serif" font-weight="bold" font-size="10.500" fill="#fff" text-anchor="middle" letter-spacing="-.3">zm</text></svg>
<div class="abs" style="left:504.5px;top:759.800px;width:5px;height:2.200px;border-radius:1.100px;background:#8a8f92"></div>
<div class="abs" style="left:549.5px;top:759.800px;width:5px;height:2.200px;border-radius:1.100px;background:#8a8f92"></div>
<div class="abs" style="left:593.1px;top:759.800px;width:5px;height:2.200px;border-radius:1.100px;background:#8a8f92"></div>
<div class="abs" style="left:681.0px;top:759.800px;width:5px;height:2.200px;border-radius:1.100px;background:#8a8f92"></div>
<div class="abs" style="left:813.3px;top:759.800px;width:5px;height:2.200px;border-radius:1.100px;background:#8a8f92"></div>
<div class="abs" style="left:856.9px;top:759.800px;width:5px;height:2.200px;border-radius:1.100px;background:#8a8f92"></div>
<div class="abs" style="left:901.2px;top:759.800px;width:5px;height:2.200px;border-radius:1.100px;background:#8a8f92"></div>
<div class="abs" style="left:939.500px;top:759.500px;width:16px;height:2.600px;border-radius:1.300px;background:#1a6fe0"></div>
<svg class="abs" style="left:1097.500px;top:740px" width="13" height="8" viewBox="0 0 13 8"><path d="M1 6.800 L6.500 1.400 L12 6.800" fill="none" stroke="#1a1a1a" stroke-width="1.400"/></svg>
<svg class="abs" style="left:1125px;top:734px" width="23" height="19" viewBox="0 0 23 19" fill="none" stroke="#1f62c4" stroke-width="1.200"><rect x="3.200" y="1.200" width="3.800" height="7.600" rx="1.900"/><path d="M1.200 6.800 a3.900 3.900 0 0 0 7.800 0 M5.100 10.800 V13.400"/><path d="M11.400 10.600 L21 7.600 L17 16.800 L15.400 12.400 Z" stroke-linejoin="round"/></svg>
<div class="t" style="left:1164.600px;top:733.200px;font-size:10.300px;color:#1a1a1a;--w:19px;transform:scaleX(0.9219)">ESP</div>
<div class="t" style="left:1163.600px;top:748.700px;font-size:10.300px;color:#1a1a1a;--w:21px;transform:scaleX(1.0787)">LAA</div>
<svg class="abs" style="left:1203.500px;top:737px" width="18" height="13" viewBox="0 0 18 13" fill="none" stroke="#1a1a1a" stroke-width="1.200" stroke-linecap="round"><path d="M1.200 4.800 C5.400 .2 12.600 .2 16.800 4.800"/><path d="M3.800 7.400 C6.800 4.200 11.200 4.200 14.200 7.400"/><path d="M6.400 9.800 C8 8.200 10 8.200 11.600 9.800"/><circle cx="9" cy="11.600" r=".9" fill="#1a1a1a" stroke="none"/></svg>
<svg class="abs" style="left:1227px;top:736.500px" width="18" height="14" viewBox="0 0 18 14" fill="none" stroke="#1a1a1a" stroke-width="1.100" stroke-linejoin="round"><path d="M1 5 H3.800 L7.400 1.600 V12.400 L3.800 9 H1 Z"/><path d="M9.800 4.800 C10.800 6 10.800 8 9.800 9.200 M12 3 C13.800 5.200 13.800 8.800 12 11 M14.200 1.400 C17 4.600 17 9.400 14.200 12.600" stroke-linecap="round"/></svg>
<svg class="abs" style="left:1251.500px;top:735.500px" width="18" height="15" viewBox="0 0 18 15"><rect x="1.400" y="5" width="13.600" height="8" rx="1.800" fill="none" stroke="#1a1a1a" stroke-width="1.200"/><rect x="3" y="6.600" width="10.400" height="4.800" rx=".8" fill="#1a1a1a"/><rect x="15.600" y="7.400" width="1.600" height="3.200" rx=".6" fill="#1a1a1a"/><path d="M3.600 .8 L2 4.600 H4.400 L3.400 7.400 L6.600 3.400 H4.400 L5.600 .8 Z" fill="#1a1a1a" stroke="#eef1f2" stroke-width=".5"/></svg>
<div class="t" style="left:1318.800px;top:731.800px;font-size:10.300px;color:#1a1a1a;--w:27.700px;transform:scaleX(1.1073)">14:11</div>
<div class="t" style="left:1285px;top:747.600px;font-size:10.300px;color:#1a1a1a;--w:61.500px;transform:scaleX(1.1676)">06-01-2026</div>

</div>
</body>
</html>
